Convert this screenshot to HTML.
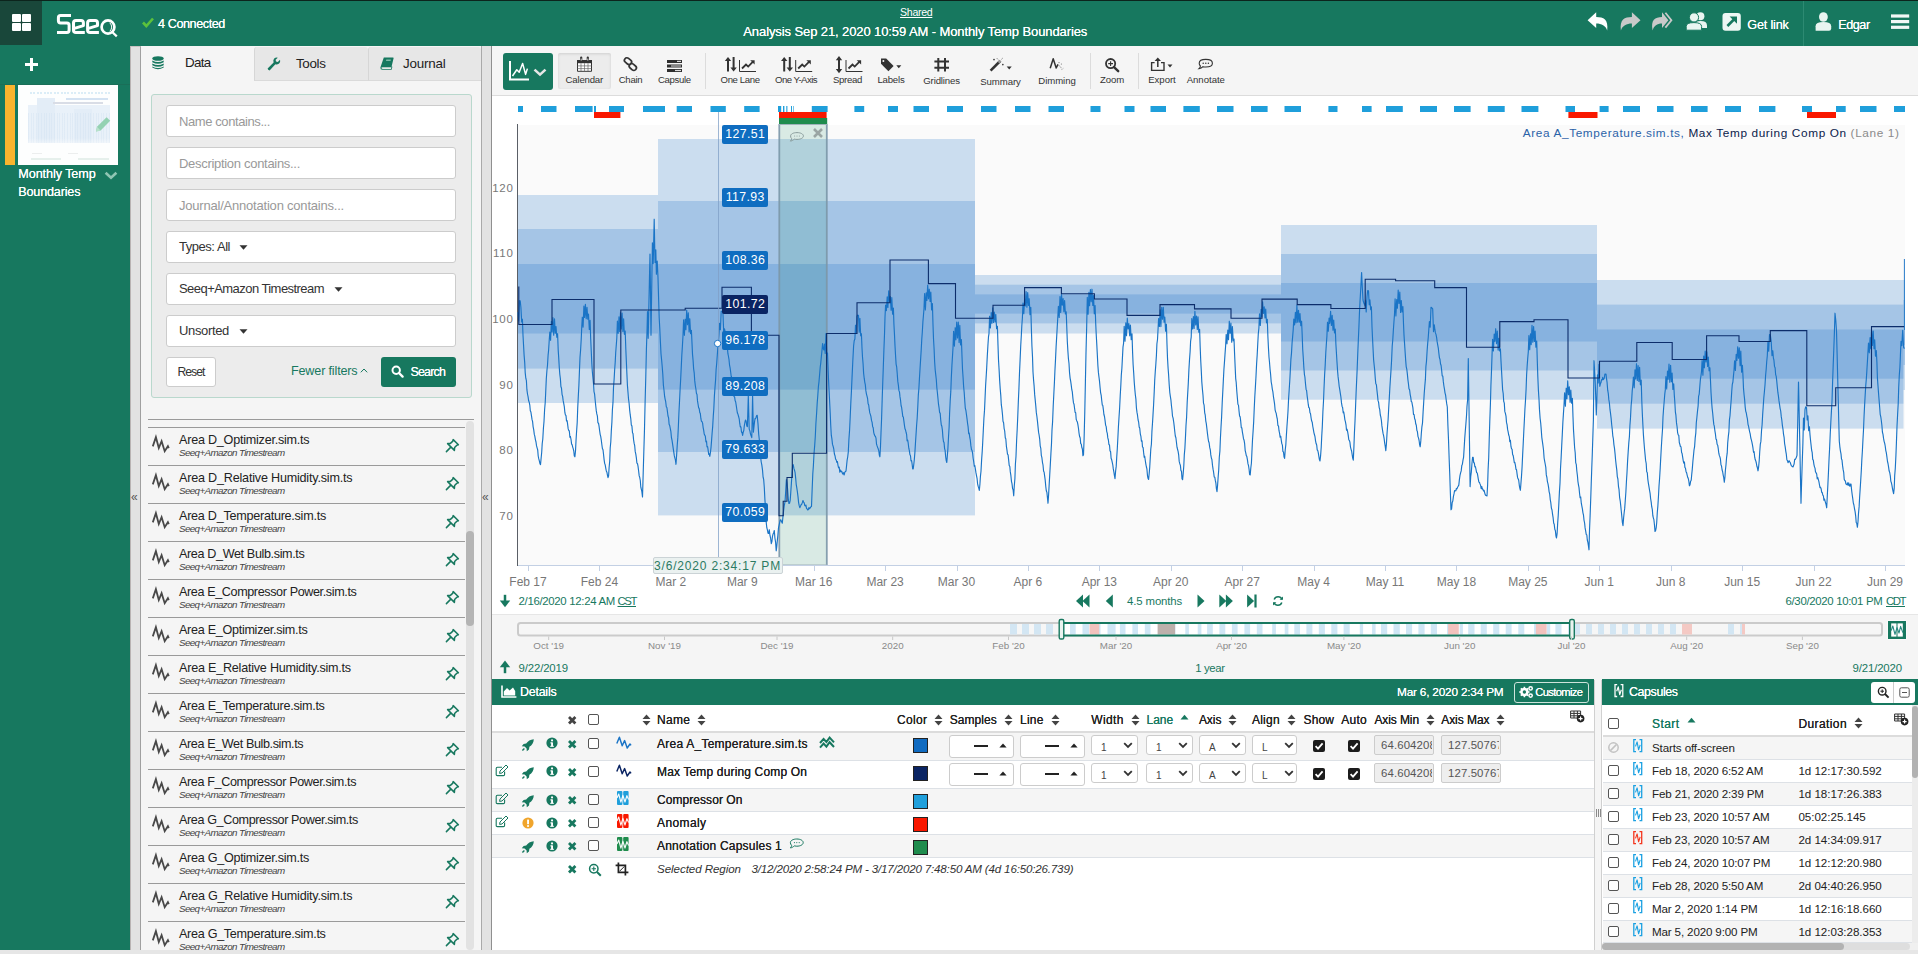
<!DOCTYPE html>
<html><head><meta charset="utf-8"><title>Seeq</title>
<style>
*{box-sizing:border-box}
html,body{margin:0;padding:0}
body{width:1918px;height:954px;overflow:hidden;background:#fff;font-family:"Liberation Sans",sans-serif;color:#222;position:relative;font-size:12px}
.abs{position:absolute}
.t{position:absolute;white-space:nowrap;line-height:1}
svg{position:absolute;overflow:visible}
#hdr{position:absolute;left:0;top:0;width:1918px;height:46px;background:#17785f;border-top:1px solid #0c241c}
#nav{position:absolute;left:0;top:46px;width:130px;height:904px;background:#17785f}
#bot{position:absolute;left:0;top:950px;width:1918px;height:4px;background:#e6e6e6}
.w{color:#fff}

#spl1{position:absolute;left:130px;top:46px;width:11px;height:904px;background:#e2e2e2;border-left:1px solid #b9b3b3;border-top:1px solid #c9c3c3;border-right:1px solid #a0a0a0}
#spl2{position:absolute;left:481px;top:46px;width:11px;height:904px;background:#e2e2e2;border-left:1px solid #a9a9a9;border-right:1px solid #8a8a8a}
#pnl{position:absolute;left:141px;top:46px;width:340px;height:904px;background:#f5f5f5}
.tab{position:absolute;top:47px;height:34px;background:#e7e7e7;border-left:1px solid #d6d6d6;border-bottom:1px solid #dadada;border-radius:3px 3px 0 0}
.inp{position:absolute;left:166px;width:290px;height:32px;background:#fff;border:1px solid #ccc;border-radius:3px;font-size:13px;line-height:30px;padding-left:12px;white-space:nowrap}
.ph{color:#999}
.li{position:absolute;left:148px;width:317px;height:38px;border-top:1px solid #9a9a9a}
.li .n{position:absolute;left:31px;top:4px;font-size:12.6px;color:#222;white-space:nowrap;line-height:15px;letter-spacing:-0.15px}
.li .s{position:absolute;left:31px;top:18px;font-size:9.6px;font-style:italic;color:#444;white-space:nowrap;line-height:12px;letter-spacing:-0.1px}

#tb{position:absolute;left:492px;top:46px;width:1426px;height:50px;background:#f5f5f5;border-bottom:1px solid #dcdcdc}
.sep{position:absolute;top:53px;width:1px;height:36px;background:#dcdcdc}

.vl{position:absolute;width:46px;height:19px;border-radius:2px;color:#fff;font-size:12.3px;line-height:19px;text-align:center;letter-spacing:.42px;white-space:nowrap;padding-left:.5px}

#scr{position:absolute;left:492px;top:614px;width:1426px;height:66px;background:#f5f5f5;border-top:1px solid #e6e6e6}

.hd{position:absolute;background:#17785f;height:26px;top:679px}
.row{position:absolute;left:492px;width:1102px;border-bottom:1px solid #dde1e6}
.sel{position:absolute;background:#fff;border:1px solid #ccc;border-radius:3px}
.ro{position:absolute;background:#eee;border:1px solid #ccc;border-radius:2px;height:20px;overflow:hidden}
.cb{position:absolute;width:11px;height:11px;border:1.3px solid #555;border-radius:2px;background:#fff}
.cbk{position:absolute;width:12px;height:12px;border-radius:2px;background:#1c1c1c}
.sw{position:absolute;left:913px;width:15px;height:15px;border:1px solid #222}
</style></head>
<body>
<div class="abs" style="left:492px;top:96px;width:1426px;height:518px;background:#fff"></div>
<div id="hdr"></div>
<div class="abs" style="left:0;top:1px;width:42px;height:44px;background:#19473a"></div>
<div class="abs" style="left:12px;top:14px;width:9px;height:8px;background:#fff;border-radius:1px"></div>
<div class="abs" style="left:22px;top:14px;width:9px;height:8px;background:#fff;border-radius:1px"></div>
<div class="abs" style="left:12px;top:23px;width:9px;height:8px;background:#fff;border-radius:1px"></div>
<div class="abs" style="left:22px;top:23px;width:9px;height:8px;background:#fff;border-radius:1px"></div>
<svg style="left:50px;top:8px" width="75" height="34" viewBox="50 8 75 34">
<g fill="none" stroke="#fff" stroke-width="3" stroke-linejoin="round">
<path d="M71 15.6 H60.6 Q58.4 15.6 58.4 17.8 V20.8 Q58.4 23 60.6 23 H66.9 Q69.1 23 69.1 25.2 V30.3 Q69.1 32.5 66.9 32.5 H57"/>
<path d="M73.6 28.6 L83.4 25.6 V22.8 Q83.4 20.5 81 20.5 H76 Q73.5 20.5 73.5 22.8 V30.2 Q73.5 32.5 76 32.5 H84.8"/>
<path d="M87.7 28.6 L97.5 25.6 V22.8 Q97.5 20.5 95.1 20.5 H90.1 Q87.6 20.5 87.6 22.8 V30.2 Q87.6 32.5 90.1 32.5 H98.9"/>
<ellipse cx="108" cy="27" rx="6.4" ry="6.6" stroke-width="2.7"/>
</g>
<path d="M111.4 31.2 L116.8 36.4" stroke="#fff" stroke-width="2.2" fill="none"/>
<path d="M109.8 22.8 Q113.6 27 109.8 31.4" stroke="#fff" stroke-width="1" fill="none"/>
</svg>
<svg style="left:142px;top:17px" width="12" height="11" viewBox="0 0 12 11"><path d="M1 5.5 L4.3 9 L11 1.5" stroke="#5cc13c" stroke-width="2.6" fill="none"/></svg>
<div class="t" style="left:158.00px;top:13.60px;font-size:12.60px;color:#fff;height:20px;line-height:20px;letter-spacing:-0.405px;text-shadow:0 0 .5px #fff;">4 Connected</div>
<div class="t" style="left:900.05px;top:2.40px;font-size:10.60px;color:#fff;height:20px;line-height:20px;letter-spacing:-0.313px;text-decoration:underline;">Shared</div>
<div class="t" style="left:743.30px;top:21.50px;font-size:13.00px;color:#fff;height:20px;line-height:20px;letter-spacing:-0.099px;text-shadow:0 0 .4px #fff;">Analysis Sep 21, 2020 10:59 AM - Monthly Temp Boundaries</div>
<svg style="left:1578px;top:0" width="340" height="46" viewBox="1578 0 340 46"><path d="M1587.6 20.2 L1596.2 12.3 V17 C1603.6 17 1608.6 19.5 1607.2 30.4 C1605.6 25.5 1601.6 23.4 1596.2 23.4 V28 Z" fill="#fff"/><path d="M1640.5 20.2 L1631.9 12.3 V17 C1624.5 17 1619.5 19.5 1620.9 30.4 C1622.5 25.5 1626.5 23.4 1631.9 23.4 V28 Z" fill="#c9c9c9"/><path d="M1662 17 C1655 17 1650.5 20 1652.6 30.4 C1654 25.5 1657 23.4 1662 23.4 V28 L1668.4 20.2 L1662 12.3 Z" fill="#c9c9c9"/><path d="M1665.4 12.8 L1671.4 20.2 L1665.4 27.6" stroke="#c9c9c9" stroke-width="1.8" fill="none"/><g fill="#e9f5f1"><circle cx="1700.4" cy="16.2" r="4"/><path d="M1694.8 29.8 V25.4 Q1694.8 21 1700.6 21 Q1707 21 1707 25.4 V28 H1700 Z"/></g><g fill="#e9f5f1" stroke="#17785f" stroke-width="1"><circle cx="1694" cy="17.4" r="4.6"/><path d="M1686.2 30.2 V26.4 Q1686.2 22.6 1694 22.6 Q1701.6 22.6 1701.6 26.4 V30.2 Z"/></g><rect x="1722.5" y="13" width="18.3" height="17.7" rx="3" fill="#eef7f4"/><path d="M1727.4 26 L1735.4 18" stroke="#17785f" stroke-width="2.6"/><path d="M1729.6 16.4 H1737 V23.8 Z" fill="#17785f"/><path d="M1803.5 1 V46" stroke="#2d8a72" stroke-width="1"/><g fill="#e9f5f1"><ellipse cx="1823.4" cy="17" rx="4.4" ry="4.8"/><path d="M1815.6 30.7 V26.2 Q1815.6 22 1823.4 22 Q1831.2 22 1831.2 26.2 V28.4 Q1831.2 30.7 1829 30.7 Z"/></g><rect x="1891" y="14.4" width="18.2" height="3.2" fill="#f2f8f6"/><rect x="1891" y="20" width="18.2" height="3.2" fill="#f2f8f6"/><rect x="1891" y="25.7" width="18.2" height="3.2" fill="#f2f8f6"/></svg>
<div class="t" style="left:1747.30px;top:14.70px;font-size:12.60px;color:#fff;height:20px;line-height:20px;letter-spacing:-0.177px;text-shadow:0 0 .5px #fff;">Get link</div>
<div class="t" style="left:1838.30px;top:14.70px;font-size:12.60px;color:#fff;height:20px;line-height:20px;letter-spacing:-0.445px;text-shadow:0 0 .5px #fff;">Edgar</div>
<div id="nav"></div>
<div class="abs" style="left:25px;top:63px;width:13px;height:3px;background:#fff"></div>
<div class="abs" style="left:30px;top:58px;width:3px;height:13px;background:#fff"></div>
<div class="abs" style="left:0;top:84px;width:130px;height:1px;background:#1a6e58"></div>
<div class="abs" style="left:5px;top:85px;width:10px;height:80px;background:#fbb42e"></div>
<div class="abs" style="left:18px;top:85px;width:100px;height:80px;background:#fdfefe"></div>
<div class="abs" style="left:28px;top:105px;width:82px;height:38px;background:#e9f1f9"></div>
<div class="abs" style="left:37px;top:98px;width:18px;height:45px;background:#e3edf7"></div>
<div class="abs" style="left:74px;top:109px;width:18px;height:34px;background:#e3edf7"></div>
<div class="abs" style="left:28px;top:113px;width:82px;height:30px;opacity:.3;background:repeating-linear-gradient(90deg,#c9dcee 0,#c9dcee 1px,transparent 1px,transparent 2.6px)"></div>
<div class="abs" style="left:28px;top:138px;width:82px;height:11px;opacity:.9;background:linear-gradient(#ffffff00,#fdfefe)"></div>
<div class="abs" style="left:30px;top:92px;width:80px;height:1.5px;opacity:.5;background:repeating-linear-gradient(90deg,#b9dcf0 0,#b9dcf0 2px,transparent 2px,transparent 3.4px)"></div>
<div class="abs" style="left:66px;top:97.5px;width:42px;height:2px;background:#d3e2f2"></div>
<div class="abs" style="left:53px;top:102px;width:50px;height:2px;background:#d9dde6"></div>
<div class="abs" style="left:32px;top:152.5px;width:10px;height:1.6px;background:#eceeee"></div><div class="abs" style="left:68px;top:152.5px;width:10px;height:1.6px;background:#eceeee"></div>
<div class="abs" style="left:31px;top:158px;width:30px;height:1.6px;background:#e6f0ec"></div><div class="abs" style="left:78px;top:158px;width:31px;height:1.6px;background:#e6f0ec"></div>
<svg style="left:94px;top:115px" width="18" height="18" viewBox="0 0 18 18"><path d="M2 16.4 L3 11.8 L12.6 2.2 L16.2 5.8 L6.6 15.4 Z" fill="#8fd0ae" opacity=".95"/><path d="M2 16.4 L3 11.8 L6.6 15.4 Z" fill="#b8e2cc"/></svg>
<div class="t" style="left:18.30px;top:164.10px;font-size:12.60px;color:#fff;height:20px;line-height:20px;letter-spacing:-0.067px;text-shadow:0 0 .5px #fff;">Monthly Temp</div>
<div class="t" style="left:18.30px;top:181.60px;font-size:12.60px;color:#fff;height:20px;line-height:20px;letter-spacing:-0.174px;text-shadow:0 0 .5px #fff;">Boundaries</div>
<svg style="left:103.6px;top:170.6px" width="14" height="9" viewBox="0 0 14 9"><path d="M1.6 1.8 L7 6.8 L12.4 1.8" stroke="#8fc5b3" stroke-width="2.6" fill="none"/></svg>
<div id="spl1"></div><div id="pnl"></div><div id="spl2"></div>
<div class="t" style="left:131px;top:491px;font-size:12px;color:#555">&#171;</div>
<div class="t" style="left:482px;top:491px;font-size:12px;color:#555">&#171;</div>
<div class="tab" style="left:254px;width:114px"></div>
<div class="tab" style="left:368px;width:113px"></div>
<svg style="left:152.3px;top:56px" width="12" height="14" viewBox="0 0 12 14"><g fill="#17785f"><ellipse cx="6" cy="2.5" rx="5.7" ry="2.3"/><path d="M.3 4.4 Q6 7.4 11.7 4.4 V6.2 Q6 9.2 .3 6.2Z"/><path d="M.3 7.4 Q6 10.4 11.7 7.4 V9.2 Q6 12.2 .3 9.2Z"/><path d="M.3 10.4 Q6 13.4 11.7 10.4 V11.4 Q6 15 .3 11.4Z"/></g></svg>
<div class="t" style="left:185.00px;top:53.00px;font-size:13.40px;color:#222;height:20px;line-height:20px;letter-spacing:-0.701px;">Data</div>
<svg style="left:267px;top:57px" width="14" height="14" viewBox="0 0 14 14"><path d="M1.2 12.8 L2.6 13.6 L8.4 7.2 Q11 8 12.6 6 Q13.6 4.4 13 2.8 L10.8 5 L9 4.6 L8.6 2.8 L10.8 .8 Q8.8 .2 7.2 1.6 Q5.8 3.2 6.6 5.4 L.6 11.4Z" fill="#17785f"/></svg>
<div class="t" style="left:296.00px;top:54.00px;font-size:13.40px;color:#222;height:20px;line-height:20px;letter-spacing:-0.356px;">Tools</div>
<svg style="left:380px;top:57px" width="14" height="13" viewBox="0 0 14 13"><path d="M3.8 .4 H13 Q13.8 .4 13.6 1.2 L11.4 10.2 H2.4 Q1.2 10.2 1.3 11.1 Q1.5 11.9 2.6 11.9 H11 L11.6 9.6 L12.4 9.8 L11.6 12.8 H2.2 Q.2 12.8 .4 10.6Z" fill="#17785f"/><rect x="6" y="2.4" width="4.6" height="1.6" fill="#7db9a6" transform="skewX(-12) translate(.8 0)"/></svg>
<div class="t" style="left:403.00px;top:54.00px;font-size:13.40px;color:#222;height:20px;line-height:20px;letter-spacing:-0.207px;">Journal</div>
<div class="abs" style="left:150.5px;top:94px;width:321.5px;height:304px;background:#ececec;border:1px solid #b9d8cd;border-radius:3px"></div>
<div class="inp" style="top:105px"></div>
<div class="t" style="left:179.00px;top:111.60px;font-size:13.00px;color:#999;height:20px;line-height:20px;letter-spacing:-0.409px;">Name contains...</div>
<div class="inp" style="top:147px"></div>
<div class="t" style="left:179.00px;top:153.60px;font-size:13.00px;color:#999;height:20px;line-height:20px;letter-spacing:-0.300px;">Description contains...</div>
<div class="inp" style="top:189px"></div>
<div class="t" style="left:179.00px;top:195.60px;font-size:13.00px;color:#999;height:20px;line-height:20px;letter-spacing:-0.209px;">Journal/Annotation contains...</div>
<div class="inp" style="top:231px"></div>
<div class="t" style="left:179.00px;top:237.40px;font-size:13.00px;color:#333;height:20px;line-height:20px;letter-spacing:-0.464px;">Types: All</div>
<svg style="left:239px;top:245px" width="9" height="5" viewBox="0 0 9 5"><path d="M0.5 0.3 H8.5 L4.5 4.7 Z" fill="#333"/></svg>
<div class="inp" style="top:273px"></div>
<div class="t" style="left:179.00px;top:279.40px;font-size:13.00px;color:#333;height:20px;line-height:20px;letter-spacing:-0.553px;">Seeq+Amazon Timestream</div>
<svg style="left:334px;top:287px" width="9" height="5" viewBox="0 0 9 5"><path d="M0.5 0.3 H8.5 L4.5 4.7 Z" fill="#333"/></svg>
<div class="inp" style="top:315px"></div>
<div class="t" style="left:179.00px;top:321.40px;font-size:13.00px;color:#333;height:20px;line-height:20px;letter-spacing:-0.344px;">Unsorted</div>
<svg style="left:239px;top:329px" width="9" height="5" viewBox="0 0 9 5"><path d="M0.5 0.3 H8.5 L4.5 4.7 Z" fill="#333"/></svg>
<div class="abs" style="left:166px;top:357px;width:50px;height:30px;background:#fff;border:1px solid #ccc;border-radius:3px"></div>
<div class="t" style="left:177.40px;top:362.30px;font-size:12.20px;color:#333;height:20px;line-height:20px;letter-spacing:-0.934px;">Reset</div>
<div class="t" style="left:291.00px;top:361.00px;font-size:12.60px;color:#17785f;height:20px;line-height:20px;letter-spacing:-0.162px;">Fewer filters</div>
<svg style="left:360px;top:368px" width="8" height="5" viewBox="0 0 8 5"><path d="M.8 4.3 L4 1 L7.2 4.3" fill="none" stroke="#17785f" stroke-width="1"/></svg>
<div class="abs" style="left:381px;top:357px;width:75px;height:30px;background:#17785f;border-radius:3px"></div>
<svg style="left:391px;top:365px" width="13" height="13" viewBox="0 0 13 13"><circle cx="5.2" cy="5.2" r="3.7" fill="none" stroke="#fff" stroke-width="2"/><path d="M8 8 L11.6 11.6" stroke="#fff" stroke-width="2.4" stroke-linecap="round"/></svg>
<div class="t" style="left:410.50px;top:362.00px;font-size:12.40px;color:#fff;height:20px;line-height:20px;letter-spacing:-0.798px;text-shadow:0 0 .4px #fff;">Search</div>
<div class="abs" style="left:148px;top:419px;width:326px;height:1px;background:#9a9a9a"></div>
<div class="abs" style="left:466px;top:421px;width:8px;height:529px;background:#e2e2e2;border-radius:4px"></div>
<div class="abs" style="left:466px;top:531px;width:8px;height:95px;background:#b4b4b4;border-radius:4px"></div>
<div class="li" style="top:427px;height:38px;overflow:hidden"><div class="t" style="left:31.00px;top:2.30px;font-size:12.60px;color:#222;height:20px;line-height:20px;letter-spacing:-0.232px;">Area D_Optimizer.sim.ts</div><div class="t" style="left:31.00px;top:14.80px;font-size:9.80px;color:#444;height:20px;line-height:20px;letter-spacing:-0.610px;font-style:italic;">Seeq+Amazon Timestream</div></div>
<div class="abs" style="left:148px;top:427px;width:317px;height:38px;overflow:hidden"><svg style="left:4px;top:9.3px" width="18" height="17" viewBox="0 0 18 17"><path d="M0.8 10.4 L3.9 1.2 L6.8 12 L9.6 5.2 L12.7 15.2 L15.9 10.2 L16.8 12.2" fill="none" stroke="#484848" stroke-width="1.8" stroke-linejoin="miter"/></svg><svg style="left:297px;top:11px" width="15" height="15" viewBox="0 0 15 15"><g fill="none" stroke="#17785f" stroke-width="1.5" stroke-linejoin="round" stroke-linecap="round"><path d="M8.2 1.6 L13.4 6.8 L11.6 7.4 L9.6 9.6 L9.4 12.4 L2.6 5.6 L5.4 5.4 L7.6 3.4 Z"/><path d="M5.6 9.4 L1.4 13.6"/></g></svg></div>
<div class="li" style="top:465px;height:38px;overflow:hidden"><div class="t" style="left:31.00px;top:2.30px;font-size:12.60px;color:#222;height:20px;line-height:20px;letter-spacing:-0.201px;">Area D_Relative Humidity.sim.ts</div><div class="t" style="left:31.00px;top:14.80px;font-size:9.80px;color:#444;height:20px;line-height:20px;letter-spacing:-0.610px;font-style:italic;">Seeq+Amazon Timestream</div></div>
<div class="abs" style="left:148px;top:465px;width:317px;height:38px;overflow:hidden"><svg style="left:4px;top:9.3px" width="18" height="17" viewBox="0 0 18 17"><path d="M0.8 10.4 L3.9 1.2 L6.8 12 L9.6 5.2 L12.7 15.2 L15.9 10.2 L16.8 12.2" fill="none" stroke="#484848" stroke-width="1.8" stroke-linejoin="miter"/></svg><svg style="left:297px;top:11px" width="15" height="15" viewBox="0 0 15 15"><g fill="none" stroke="#17785f" stroke-width="1.5" stroke-linejoin="round" stroke-linecap="round"><path d="M8.2 1.6 L13.4 6.8 L11.6 7.4 L9.6 9.6 L9.4 12.4 L2.6 5.6 L5.4 5.4 L7.6 3.4 Z"/><path d="M5.6 9.4 L1.4 13.6"/></g></svg></div>
<div class="li" style="top:503px;height:38px;overflow:hidden"><div class="t" style="left:31.00px;top:2.30px;font-size:12.60px;color:#222;height:20px;line-height:20px;letter-spacing:-0.254px;">Area D_Temperature.sim.ts</div><div class="t" style="left:31.00px;top:14.80px;font-size:9.80px;color:#444;height:20px;line-height:20px;letter-spacing:-0.610px;font-style:italic;">Seeq+Amazon Timestream</div></div>
<div class="abs" style="left:148px;top:503px;width:317px;height:38px;overflow:hidden"><svg style="left:4px;top:9.3px" width="18" height="17" viewBox="0 0 18 17"><path d="M0.8 10.4 L3.9 1.2 L6.8 12 L9.6 5.2 L12.7 15.2 L15.9 10.2 L16.8 12.2" fill="none" stroke="#484848" stroke-width="1.8" stroke-linejoin="miter"/></svg><svg style="left:297px;top:11px" width="15" height="15" viewBox="0 0 15 15"><g fill="none" stroke="#17785f" stroke-width="1.5" stroke-linejoin="round" stroke-linecap="round"><path d="M8.2 1.6 L13.4 6.8 L11.6 7.4 L9.6 9.6 L9.4 12.4 L2.6 5.6 L5.4 5.4 L7.6 3.4 Z"/><path d="M5.6 9.4 L1.4 13.6"/></g></svg></div>
<div class="li" style="top:541px;height:38px;overflow:hidden"><div class="t" style="left:31.00px;top:2.30px;font-size:12.60px;color:#222;height:20px;line-height:20px;letter-spacing:-0.364px;">Area D_Wet Bulb.sim.ts</div><div class="t" style="left:31.00px;top:14.80px;font-size:9.80px;color:#444;height:20px;line-height:20px;letter-spacing:-0.610px;font-style:italic;">Seeq+Amazon Timestream</div></div>
<div class="abs" style="left:148px;top:541px;width:317px;height:38px;overflow:hidden"><svg style="left:4px;top:9.3px" width="18" height="17" viewBox="0 0 18 17"><path d="M0.8 10.4 L3.9 1.2 L6.8 12 L9.6 5.2 L12.7 15.2 L15.9 10.2 L16.8 12.2" fill="none" stroke="#484848" stroke-width="1.8" stroke-linejoin="miter"/></svg><svg style="left:297px;top:11px" width="15" height="15" viewBox="0 0 15 15"><g fill="none" stroke="#17785f" stroke-width="1.5" stroke-linejoin="round" stroke-linecap="round"><path d="M8.2 1.6 L13.4 6.8 L11.6 7.4 L9.6 9.6 L9.4 12.4 L2.6 5.6 L5.4 5.4 L7.6 3.4 Z"/><path d="M5.6 9.4 L1.4 13.6"/></g></svg></div>
<div class="li" style="top:579px;height:38px;overflow:hidden"><div class="t" style="left:31.00px;top:2.30px;font-size:12.60px;color:#222;height:20px;line-height:20px;letter-spacing:-0.385px;">Area E_Compressor Power.sim.ts</div><div class="t" style="left:31.00px;top:14.80px;font-size:9.80px;color:#444;height:20px;line-height:20px;letter-spacing:-0.610px;font-style:italic;">Seeq+Amazon Timestream</div></div>
<div class="abs" style="left:148px;top:579px;width:317px;height:38px;overflow:hidden"><svg style="left:4px;top:9.3px" width="18" height="17" viewBox="0 0 18 17"><path d="M0.8 10.4 L3.9 1.2 L6.8 12 L9.6 5.2 L12.7 15.2 L15.9 10.2 L16.8 12.2" fill="none" stroke="#484848" stroke-width="1.8" stroke-linejoin="miter"/></svg><svg style="left:297px;top:11px" width="15" height="15" viewBox="0 0 15 15"><g fill="none" stroke="#17785f" stroke-width="1.5" stroke-linejoin="round" stroke-linecap="round"><path d="M8.2 1.6 L13.4 6.8 L11.6 7.4 L9.6 9.6 L9.4 12.4 L2.6 5.6 L5.4 5.4 L7.6 3.4 Z"/><path d="M5.6 9.4 L1.4 13.6"/></g></svg></div>
<div class="li" style="top:617px;height:38px;overflow:hidden"><div class="t" style="left:31.00px;top:2.30px;font-size:12.60px;color:#222;height:20px;line-height:20px;letter-spacing:-0.289px;">Area E_Optimizer.sim.ts</div><div class="t" style="left:31.00px;top:14.80px;font-size:9.80px;color:#444;height:20px;line-height:20px;letter-spacing:-0.610px;font-style:italic;">Seeq+Amazon Timestream</div></div>
<div class="abs" style="left:148px;top:617px;width:317px;height:38px;overflow:hidden"><svg style="left:4px;top:9.3px" width="18" height="17" viewBox="0 0 18 17"><path d="M0.8 10.4 L3.9 1.2 L6.8 12 L9.6 5.2 L12.7 15.2 L15.9 10.2 L16.8 12.2" fill="none" stroke="#484848" stroke-width="1.8" stroke-linejoin="miter"/></svg><svg style="left:297px;top:11px" width="15" height="15" viewBox="0 0 15 15"><g fill="none" stroke="#17785f" stroke-width="1.5" stroke-linejoin="round" stroke-linecap="round"><path d="M8.2 1.6 L13.4 6.8 L11.6 7.4 L9.6 9.6 L9.4 12.4 L2.6 5.6 L5.4 5.4 L7.6 3.4 Z"/><path d="M5.6 9.4 L1.4 13.6"/></g></svg></div>
<div class="li" style="top:655px;height:38px;overflow:hidden"><div class="t" style="left:31.00px;top:2.30px;font-size:12.60px;color:#222;height:20px;line-height:20px;letter-spacing:-0.226px;">Area E_Relative Humidity.sim.ts</div><div class="t" style="left:31.00px;top:14.80px;font-size:9.80px;color:#444;height:20px;line-height:20px;letter-spacing:-0.610px;font-style:italic;">Seeq+Amazon Timestream</div></div>
<div class="abs" style="left:148px;top:655px;width:317px;height:38px;overflow:hidden"><svg style="left:4px;top:9.3px" width="18" height="17" viewBox="0 0 18 17"><path d="M0.8 10.4 L3.9 1.2 L6.8 12 L9.6 5.2 L12.7 15.2 L15.9 10.2 L16.8 12.2" fill="none" stroke="#484848" stroke-width="1.8" stroke-linejoin="miter"/></svg><svg style="left:297px;top:11px" width="15" height="15" viewBox="0 0 15 15"><g fill="none" stroke="#17785f" stroke-width="1.5" stroke-linejoin="round" stroke-linecap="round"><path d="M8.2 1.6 L13.4 6.8 L11.6 7.4 L9.6 9.6 L9.4 12.4 L2.6 5.6 L5.4 5.4 L7.6 3.4 Z"/><path d="M5.6 9.4 L1.4 13.6"/></g></svg></div>
<div class="li" style="top:693px;height:38px;overflow:hidden"><div class="t" style="left:31.00px;top:2.30px;font-size:12.60px;color:#222;height:20px;line-height:20px;letter-spacing:-0.278px;">Area E_Temperature.sim.ts</div><div class="t" style="left:31.00px;top:14.80px;font-size:9.80px;color:#444;height:20px;line-height:20px;letter-spacing:-0.610px;font-style:italic;">Seeq+Amazon Timestream</div></div>
<div class="abs" style="left:148px;top:693px;width:317px;height:38px;overflow:hidden"><svg style="left:4px;top:9.3px" width="18" height="17" viewBox="0 0 18 17"><path d="M0.8 10.4 L3.9 1.2 L6.8 12 L9.6 5.2 L12.7 15.2 L15.9 10.2 L16.8 12.2" fill="none" stroke="#484848" stroke-width="1.8" stroke-linejoin="miter"/></svg><svg style="left:297px;top:11px" width="15" height="15" viewBox="0 0 15 15"><g fill="none" stroke="#17785f" stroke-width="1.5" stroke-linejoin="round" stroke-linecap="round"><path d="M8.2 1.6 L13.4 6.8 L11.6 7.4 L9.6 9.6 L9.4 12.4 L2.6 5.6 L5.4 5.4 L7.6 3.4 Z"/><path d="M5.6 9.4 L1.4 13.6"/></g></svg></div>
<div class="li" style="top:731px;height:38px;overflow:hidden"><div class="t" style="left:31.00px;top:2.30px;font-size:12.60px;color:#222;height:20px;line-height:20px;letter-spacing:-0.387px;">Area E_Wet Bulb.sim.ts</div><div class="t" style="left:31.00px;top:14.80px;font-size:9.80px;color:#444;height:20px;line-height:20px;letter-spacing:-0.610px;font-style:italic;">Seeq+Amazon Timestream</div></div>
<div class="abs" style="left:148px;top:731px;width:317px;height:38px;overflow:hidden"><svg style="left:4px;top:9.3px" width="18" height="17" viewBox="0 0 18 17"><path d="M0.8 10.4 L3.9 1.2 L6.8 12 L9.6 5.2 L12.7 15.2 L15.9 10.2 L16.8 12.2" fill="none" stroke="#484848" stroke-width="1.8" stroke-linejoin="miter"/></svg><svg style="left:297px;top:11px" width="15" height="15" viewBox="0 0 15 15"><g fill="none" stroke="#17785f" stroke-width="1.5" stroke-linejoin="round" stroke-linecap="round"><path d="M8.2 1.6 L13.4 6.8 L11.6 7.4 L9.6 9.6 L9.4 12.4 L2.6 5.6 L5.4 5.4 L7.6 3.4 Z"/><path d="M5.6 9.4 L1.4 13.6"/></g></svg></div>
<div class="li" style="top:769px;height:38px;overflow:hidden"><div class="t" style="left:31.00px;top:2.30px;font-size:12.60px;color:#222;height:20px;line-height:20px;letter-spacing:-0.372px;">Area F_Compressor Power.sim.ts</div><div class="t" style="left:31.00px;top:14.80px;font-size:9.80px;color:#444;height:20px;line-height:20px;letter-spacing:-0.610px;font-style:italic;">Seeq+Amazon Timestream</div></div>
<div class="abs" style="left:148px;top:769px;width:317px;height:38px;overflow:hidden"><svg style="left:4px;top:9.3px" width="18" height="17" viewBox="0 0 18 17"><path d="M0.8 10.4 L3.9 1.2 L6.8 12 L9.6 5.2 L12.7 15.2 L15.9 10.2 L16.8 12.2" fill="none" stroke="#484848" stroke-width="1.8" stroke-linejoin="miter"/></svg><svg style="left:297px;top:11px" width="15" height="15" viewBox="0 0 15 15"><g fill="none" stroke="#17785f" stroke-width="1.5" stroke-linejoin="round" stroke-linecap="round"><path d="M8.2 1.6 L13.4 6.8 L11.6 7.4 L9.6 9.6 L9.4 12.4 L2.6 5.6 L5.4 5.4 L7.6 3.4 Z"/><path d="M5.6 9.4 L1.4 13.6"/></g></svg></div>
<div class="li" style="top:807px;height:38px;overflow:hidden"><div class="t" style="left:31.00px;top:2.30px;font-size:12.60px;color:#222;height:20px;line-height:20px;letter-spacing:-0.382px;">Area G_Compressor Power.sim.ts</div><div class="t" style="left:31.00px;top:14.80px;font-size:9.80px;color:#444;height:20px;line-height:20px;letter-spacing:-0.610px;font-style:italic;">Seeq+Amazon Timestream</div></div>
<div class="abs" style="left:148px;top:807px;width:317px;height:38px;overflow:hidden"><svg style="left:4px;top:9.3px" width="18" height="17" viewBox="0 0 18 17"><path d="M0.8 10.4 L3.9 1.2 L6.8 12 L9.6 5.2 L12.7 15.2 L15.9 10.2 L16.8 12.2" fill="none" stroke="#484848" stroke-width="1.8" stroke-linejoin="miter"/></svg><svg style="left:297px;top:11px" width="15" height="15" viewBox="0 0 15 15"><g fill="none" stroke="#17785f" stroke-width="1.5" stroke-linejoin="round" stroke-linecap="round"><path d="M8.2 1.6 L13.4 6.8 L11.6 7.4 L9.6 9.6 L9.4 12.4 L2.6 5.6 L5.4 5.4 L7.6 3.4 Z"/><path d="M5.6 9.4 L1.4 13.6"/></g></svg></div>
<div class="li" style="top:845px;height:38px;overflow:hidden"><div class="t" style="left:31.00px;top:2.30px;font-size:12.60px;color:#222;height:20px;line-height:20px;letter-spacing:-0.284px;">Area G_Optimizer.sim.ts</div><div class="t" style="left:31.00px;top:14.80px;font-size:9.80px;color:#444;height:20px;line-height:20px;letter-spacing:-0.610px;font-style:italic;">Seeq+Amazon Timestream</div></div>
<div class="abs" style="left:148px;top:845px;width:317px;height:38px;overflow:hidden"><svg style="left:4px;top:9.3px" width="18" height="17" viewBox="0 0 18 17"><path d="M0.8 10.4 L3.9 1.2 L6.8 12 L9.6 5.2 L12.7 15.2 L15.9 10.2 L16.8 12.2" fill="none" stroke="#484848" stroke-width="1.8" stroke-linejoin="miter"/></svg><svg style="left:297px;top:11px" width="15" height="15" viewBox="0 0 15 15"><g fill="none" stroke="#17785f" stroke-width="1.5" stroke-linejoin="round" stroke-linecap="round"><path d="M8.2 1.6 L13.4 6.8 L11.6 7.4 L9.6 9.6 L9.4 12.4 L2.6 5.6 L5.4 5.4 L7.6 3.4 Z"/><path d="M5.6 9.4 L1.4 13.6"/></g></svg></div>
<div class="li" style="top:883px;height:38px;overflow:hidden"><div class="t" style="left:31.00px;top:2.30px;font-size:12.60px;color:#222;height:20px;line-height:20px;letter-spacing:-0.230px;">Area G_Relative Humidity.sim.ts</div><div class="t" style="left:31.00px;top:14.80px;font-size:9.80px;color:#444;height:20px;line-height:20px;letter-spacing:-0.610px;font-style:italic;">Seeq+Amazon Timestream</div></div>
<div class="abs" style="left:148px;top:883px;width:317px;height:38px;overflow:hidden"><svg style="left:4px;top:9.3px" width="18" height="17" viewBox="0 0 18 17"><path d="M0.8 10.4 L3.9 1.2 L6.8 12 L9.6 5.2 L12.7 15.2 L15.9 10.2 L16.8 12.2" fill="none" stroke="#484848" stroke-width="1.8" stroke-linejoin="miter"/></svg><svg style="left:297px;top:11px" width="15" height="15" viewBox="0 0 15 15"><g fill="none" stroke="#17785f" stroke-width="1.5" stroke-linejoin="round" stroke-linecap="round"><path d="M8.2 1.6 L13.4 6.8 L11.6 7.4 L9.6 9.6 L9.4 12.4 L2.6 5.6 L5.4 5.4 L7.6 3.4 Z"/><path d="M5.6 9.4 L1.4 13.6"/></g></svg></div>
<div class="li" style="top:921px;height:29px;overflow:hidden"><div class="t" style="left:31.00px;top:2.30px;font-size:12.60px;color:#222;height:20px;line-height:20px;letter-spacing:-0.294px;">Area G_Temperature.sim.ts</div><div class="t" style="left:31.00px;top:14.80px;font-size:9.80px;color:#444;height:20px;line-height:20px;letter-spacing:-0.610px;font-style:italic;">Seeq+Amazon Timestream</div></div>
<div class="abs" style="left:148px;top:921px;width:317px;height:29px;overflow:hidden"><svg style="left:4px;top:9.3px" width="18" height="17" viewBox="0 0 18 17"><path d="M0.8 10.4 L3.9 1.2 L6.8 12 L9.6 5.2 L12.7 15.2 L15.9 10.2 L16.8 12.2" fill="none" stroke="#484848" stroke-width="1.8" stroke-linejoin="miter"/></svg><svg style="left:297px;top:11px" width="15" height="15" viewBox="0 0 15 15"><g fill="none" stroke="#17785f" stroke-width="1.5" stroke-linejoin="round" stroke-linecap="round"><path d="M8.2 1.6 L13.4 6.8 L11.6 7.4 L9.6 9.6 L9.4 12.4 L2.6 5.6 L5.4 5.4 L7.6 3.4 Z"/><path d="M5.6 9.4 L1.4 13.6"/></g></svg></div>
<div id="tb"></div>
<div class="abs" style="left:491px;top:46px;width:1px;height:904px;background:#8f8f8f"></div>
<div class="abs" style="left:503px;top:53px;width:50px;height:37px;background:#17785f;border-radius:3px"></div>
<svg style="left:503px;top:53px" width="50" height="37" viewBox="503 53 50 37"><path d="M510 61 V79.5 H529" stroke="#fff" stroke-width="2" fill="none"/><path d="M512.5 76 L516.8 69.8 L519.2 72.2 L522.6 63.4 L525.6 74.4 L527.4 68.6" stroke="#fff" stroke-width="1.5" fill="none" stroke-linejoin="round"/><path d="M534.5 69.6 L540 74.6 L545.5 69.6" stroke="#e6e6e6" stroke-width="2.6" fill="none"/></svg>
<div class="abs" style="left:558px;top:53px;width:53px;height:36px;background:#ececec;border-radius:2px;box-shadow:inset 0 1px 3px rgba(0,0,0,.12)"></div>
<svg style="left:492px;top:46px" width="1426" height="50" viewBox="492 46 1426 50"><path d="M577.5 60.5 H591.5 V71.3 H577.5 Z" fill="#fff" stroke="#333" stroke-width="1"/><path d="M577 60 H592 V63.2 H577 Z" fill="#333"/><path d="M581.2 57.6 V61.5 M587.8 57.6 V61.5" stroke="#333" stroke-width="2.2" stroke-linecap="round"/><path d="M581.2 58.6 V60.6 M587.8 58.6 V60.6" stroke="#fff" stroke-width=".8"/><path d="M577.5 65.9 H591.5 M577.5 68.6 H591.5 M581 63.2 V71.3 M584.5 63.2 V71.3 M588 63.2 V71.3" stroke="#666" stroke-width=".7"/><g fill="none" stroke="#333" stroke-width="1.7"><rect x="-3.9" y="-2.5" width="7.8" height="5" rx="2.5" transform="translate(628 61.2) rotate(40)"/><rect x="-3.9" y="-2.5" width="7.8" height="5" rx="2.5" transform="translate(632.8 67) rotate(40)"/></g><rect x="667" y="60" width="15" height="3" fill="#2f2f2f"/><rect x="667" y="64.5" width="15" height="3" fill="#2f2f2f"/><rect x="667" y="69" width="15" height="3" fill="#2f2f2f"/><rect x="677" y="60.8" width="4" height="1.2" fill="#ddd"/><rect x="671" y="65.3" width="10" height="1.4" fill="#aaa"/><rect x="675" y="69.9" width="6" height="1.2" fill="#ddd"/><path d="M728 71.5 V59" stroke="#333" stroke-width="2" fill="none"/><path d="M724.8 61 L728 57 L731.2 61 Z" fill="#333"/><path d="M733.6 57 V69.5" stroke="#333" stroke-width="2" fill="none"/><path d="M730.4 67.5 L733.6 71.5 L736.8 67.5 Z" fill="#333"/><path d="M739.5 60 V71.5 H756" stroke="#333" stroke-width="1" fill="none"/><path d="M742 68.5 L746 64.5 L748.2 66.6 L753 61.6" stroke="#333" stroke-width="1.8" fill="none"/><path d="M750.2 60.2 L754.6 60.2 L754.6 64.6 Z" fill="#333"/><path d="M784.2 71.5 V59" stroke="#333" stroke-width="2" fill="none"/><path d="M781 61 L784.2 57 L787.4 61 Z" fill="#333"/><path d="M789.8 57 V69.5" stroke="#333" stroke-width="2" fill="none"/><path d="M786.6 67.5 L789.8 71.5 L793 67.5 Z" fill="#333"/><path d="M795.7 60 V71.5 H812.2" stroke="#333" stroke-width="1" fill="none"/><path d="M798.2 68.5 L802.2 64.5 L804.4 66.6 L809.2 61.6" stroke="#333" stroke-width="1.8" fill="none"/><path d="M806.4 60.2 L810.8 60.2 L810.8 64.6 Z" fill="#333"/><path d="M839 58 V71" stroke="#333" stroke-width="2"/><path d="M835.8 60.2 L839 56 L842.2 60.2 Z M835.8 69 L839 73.2 L842.2 69 Z" fill="#333"/><path d="M846 60 V71.5 H862.5" stroke="#333" stroke-width="1" fill="none"/><path d="M848.5 68.5 L852.5 64.5 L854.7 66.6 L859.5 61.6" stroke="#333" stroke-width="1.8" fill="none"/><path d="M856.7 60.2 L861.1 60.2 L861.1 64.6 Z" fill="#333"/><path d="M881 58.6 H886.2 L893.6 66 L888.4 71.2 L881 63.8 Z" fill="#333"/><circle cx="883.4" cy="61" r="1" fill="#f5f5f5"/><path d="M896.3 65.3 h5 l-2.5 3 Z" fill="#333"/><path d="M938.3 58 V71.4 M945 58 V71.4 M934.4 61.6 H949 M934.4 67.8 H949" stroke="#333" stroke-width="2"/><path d="M990.6 70.6 L1000.2 61" stroke="#333" stroke-width="2.6" stroke-linecap="butt"/><path d="M998.6 62.6 L1000.6 60.6" stroke="#999" stroke-width="2.6"/><path d="M993.2 59.6 h1.6 M994 58.8 v1.6 M1002 64.6 h1.6 M1002.8 63.8 v1.6 M997 58.4 l.9 .9 M1001.6 59.2 l.9 -.9" stroke="#333" stroke-width=".8"/><path d="M1006.7 66.5 h5 l-2.5 3 Z" fill="#333"/><path d="M1050.2 68.2 L1053.2 58.8 L1056.2 68 L1058 64.4" stroke="#333" stroke-width="1.5" fill="none" stroke-linejoin="round"/><path d="M1058.6 65.4 L1060.4 66.4 L1061.8 69.4 L1063.6 68.2" stroke="#888" stroke-width="1" fill="none" stroke-dasharray="1.2 1.2"/><path d="M1059 62.6 l.01 0 M1061.4 64 l.01 0" stroke="#777" stroke-width="1.2" stroke-linecap="round"/><circle cx="1110.6" cy="63.6" r="4.6" fill="none" stroke="#333" stroke-width="1.8"/><path d="M1114 67.2 L1118.2 71.2" stroke="#333" stroke-width="2.4" stroke-linecap="round"/><path d="M1108.2 63.6 h4.8 M1110.6 61.2 v4.8" stroke="#333" stroke-width="1.1"/><path d="M1154.6 62.6 H1151.6 V70.4 H1164 V62.6 H1161" stroke="#333" stroke-width="1.4" fill="none"/><path d="M1157.8 67 V59.4" stroke="#333" stroke-width="1.5"/><path d="M1154.6 61 L1157.8 57.4 L1161 61 Z" fill="#333"/><path d="M1167.5 64.5 h5 l-2.5 3 Z" fill="#333"/><path d="M1205.8 59.4 C1209.6 59.4 1212.4 61 1212.4 63.2 C1212.4 65.4 1209.6 67 1205.8 67 C1204.8 67 1203.8 66.9 1203 66.7 C1202 67.8 1200.4 68.6 1199 68.7 C1199.8 68 1200.3 67 1200.4 66 C1199.6 65.2 1199.2 64.2 1199.2 63.2 C1199.2 61 1202 59.4 1205.8 59.4 Z" fill="none" stroke="#333" stroke-width="1.1"/><circle cx="1203.2" cy="63.2" r=".75" fill="#333"/><circle cx="1205.8" cy="63.2" r=".75" fill="#333"/><circle cx="1208.4" cy="63.2" r=".75" fill="#333"/></svg>
<div class="sep" style="left:705px"></div>
<div class="sep" style="left:1090px"></div>
<div class="sep" style="left:1138px"></div>
<div class="t" style="left:565.55px;top:69.90px;font-size:9.60px;color:#333;height:20px;line-height:20px;letter-spacing:-0.182px;">Calendar</div>
<div class="t" style="left:618.75px;top:69.90px;font-size:9.60px;color:#333;height:20px;line-height:20px;letter-spacing:-0.317px;">Chain</div>
<div class="t" style="left:657.90px;top:69.90px;font-size:9.60px;color:#333;height:20px;line-height:20px;letter-spacing:-0.317px;">Capsule</div>
<div class="t" style="left:720.60px;top:69.90px;font-size:9.60px;color:#333;height:20px;line-height:20px;letter-spacing:-0.396px;">One Lane</div>
<div class="t" style="left:775.00px;top:69.90px;font-size:9.60px;color:#333;height:20px;line-height:20px;letter-spacing:-0.549px;">One Y-Axis</div>
<div class="t" style="left:833.00px;top:69.90px;font-size:9.60px;color:#333;height:20px;line-height:20px;letter-spacing:-0.326px;">Spread</div>
<div class="t" style="left:877.50px;top:69.90px;font-size:9.60px;color:#333;height:20px;line-height:20px;letter-spacing:-0.215px;">Labels</div>
<div class="t" style="left:923.25px;top:70.80px;font-size:9.60px;color:#333;height:20px;line-height:20px;letter-spacing:-0.131px;">Gridlines</div>
<div class="t" style="left:980.25px;top:71.80px;font-size:9.60px;color:#333;height:20px;line-height:20px;letter-spacing:-0.082px;">Summary</div>
<div class="t" style="left:1038.25px;top:70.80px;font-size:9.60px;color:#333;height:20px;line-height:20px;letter-spacing:-0.053px;">Dimming</div>
<div class="t" style="left:1100.00px;top:69.70px;font-size:9.60px;color:#333;height:20px;line-height:20px;letter-spacing:-0.135px;">Zoom</div>
<div class="t" style="left:1148.25px;top:69.70px;font-size:9.60px;color:#333;height:20px;line-height:20px;letter-spacing:-0.041px;">Export</div>
<div class="t" style="left:1186.65px;top:69.70px;font-size:9.60px;color:#333;height:20px;line-height:20px;letter-spacing:-0.017px;">Annotate</div>
<svg style="left:0;top:0" width="1918" height="600" viewBox="0 0 1918 600"><rect x="518" y="125" width="1387" height="440" fill="#fafafa"/><rect x="518" y="106" width="5" height="6" fill="#1f9fdb"/><rect x="541" y="106" width="15.5" height="6" fill="#1f9fdb"/><rect x="575" y="106" width="17.6" height="6" fill="#1f9fdb"/><rect x="594" y="106" width="2" height="6" fill="#1f9fdb"/><rect x="609" y="106" width="15" height="6" fill="#1f9fdb"/><rect x="643" y="106" width="22" height="6" fill="#1f9fdb"/><rect x="676.7" y="106" width="15.3" height="6" fill="#1f9fdb"/><rect x="710.5" y="106" width="15.3" height="6" fill="#1f9fdb"/><rect x="744.2" y="106" width="15.4" height="6" fill="#1f9fdb"/><rect x="778" y="106" width="3.2" height="6" fill="#1f9fdb"/><rect x="783" y="106" width="1.4" height="6" fill="#1f9fdb"/><rect x="786.3" y="106" width="1.1" height="6" fill="#1f9fdb"/><rect x="791" y="106" width="1" height="6" fill="#1f9fdb"/><rect x="793.4" y="106" width="0.6" height="6" fill="#1f9fdb"/><rect x="811.8" y="106" width="15.8" height="6" fill="#1f9fdb"/><rect x="854.4" y="106" width="9.8" height="6" fill="#1f9fdb"/><rect x="888" y="106" width="10" height="6" fill="#1f9fdb"/><rect x="913.5" y="106" width="15.5" height="6" fill="#1f9fdb"/><rect x="947" y="106" width="16" height="6" fill="#1f9fdb"/><rect x="981" y="106" width="15.5" height="6" fill="#1f9fdb"/><rect x="1015" y="106" width="15.5" height="6" fill="#1f9fdb"/><rect x="1048.5" y="106" width="15.5" height="6" fill="#1f9fdb"/><rect x="1090.5" y="106" width="10" height="6" fill="#1f9fdb"/><rect x="1124.5" y="106" width="10" height="6" fill="#1f9fdb"/><rect x="1150.5" y="106" width="15.5" height="6" fill="#1f9fdb"/><rect x="1183.4" y="106" width="16.4" height="6" fill="#1f9fdb"/><rect x="1217" y="106" width="16.5" height="6" fill="#1f9fdb"/><rect x="1251" y="106" width="16.6" height="6" fill="#1f9fdb"/><rect x="1284.5" y="106" width="16.5" height="6" fill="#1f9fdb"/><rect x="1328.4" y="106" width="9.1" height="6" fill="#1f9fdb"/><rect x="1362" y="106" width="9.6" height="6" fill="#1f9fdb"/><rect x="1386" y="106" width="16.8" height="6" fill="#1f9fdb"/><rect x="1420" y="106" width="17" height="6" fill="#1f9fdb"/><rect x="1454" y="106" width="16.6" height="6" fill="#1f9fdb"/><rect x="1487.8" y="106" width="16.9" height="6" fill="#1f9fdb"/><rect x="1521.5" y="106" width="16.9" height="6" fill="#1f9fdb"/><rect x="1565.5" y="106" width="9.5" height="6" fill="#1f9fdb"/><rect x="1599.6" y="106" width="9" height="6" fill="#1f9fdb"/><rect x="1623" y="106" width="17" height="6" fill="#1f9fdb"/><rect x="1657" y="106" width="16.5" height="6" fill="#1f9fdb"/><rect x="1691" y="106" width="16.6" height="6" fill="#1f9fdb"/><rect x="1725" y="106" width="16" height="6" fill="#1f9fdb"/><rect x="1759" y="106" width="16.4" height="6" fill="#1f9fdb"/><rect x="1802" y="106" width="10" height="6" fill="#1f9fdb"/><rect x="1836" y="106" width="9.7" height="6" fill="#1f9fdb"/><rect x="1860" y="106" width="16.5" height="6" fill="#1f9fdb"/><rect x="1894" y="106" width="11" height="6" fill="#1f9fdb"/><rect x="594" y="112" width="26.4" height="6" fill="#f91800"/><rect x="779" y="112" width="47.6" height="6" fill="#f91800"/><rect x="1568.4" y="112" width="29.1" height="6" fill="#f91800"/><rect x="1807" y="112" width="29" height="6" fill="#f91800"/><rect x="779" y="118" width="48.2" height="6" fill="#1f8c4d"/><rect x="518" y="195" width="140" height="208" fill="rgb(16,107,193)" fill-opacity=".2"/><rect x="518" y="229" width="140" height="139.6" fill="rgb(16,107,193)" fill-opacity=".2"/><rect x="518" y="264" width="140" height="69.5" fill="rgb(16,107,193)" fill-opacity=".2"/><rect x="658" y="139" width="317" height="376.4" fill="rgb(16,107,193)" fill-opacity=".2"/><rect x="658" y="201" width="317" height="251" fill="rgb(16,107,193)" fill-opacity=".2"/><rect x="658" y="264" width="317" height="125.6" fill="rgb(16,107,193)" fill-opacity=".2"/><rect x="975" y="275" width="306" height="58.5" fill="rgb(16,107,193)" fill-opacity=".2"/><rect x="975" y="284.7" width="306" height="38.7" fill="rgb(16,107,193)" fill-opacity=".2"/><rect x="975" y="294.4" width="306" height="19.2" fill="rgb(16,107,193)" fill-opacity=".2"/><rect x="1281" y="225" width="316" height="174.7" fill="rgb(16,107,193)" fill-opacity=".2"/><rect x="1281" y="254" width="316" height="116.5" fill="rgb(16,107,193)" fill-opacity=".2"/><rect x="1281" y="283" width="316" height="58.5" fill="rgb(16,107,193)" fill-opacity=".2"/><rect x="1597" y="280" width="306.5" height="148.6" fill="rgb(16,107,193)" fill-opacity=".2"/><rect x="1597" y="304.6" width="306.5" height="99.1" fill="rgb(16,107,193)" fill-opacity=".2"/><rect x="1597" y="329.5" width="306.5" height="49.2" fill="rgb(16,107,193)" fill-opacity=".2"/><rect x="1903.5" y="259" width="1.5" height="131" fill="rgb(16,107,193)" fill-opacity=".2"/><rect x="1903.5" y="280" width="1.5" height="85" fill="rgb(16,107,193)" fill-opacity=".2"/><rect x="1903.5" y="300" width="1.5" height="45" fill="rgb(16,107,193)" fill-opacity=".2"/><rect x="779" y="124" width="48" height="441" fill="rgb(20,140,100)" fill-opacity=".14"/><path d="M779.3 124 V565 M826.8 124 V565" stroke="#7c97a8" stroke-width="1.8" fill="none" opacity=".9"/><path d="M779 124.5 H827 M779 565 H827" stroke="#9fb2ba" stroke-width="1.2"/><path d="M517 565.5 H1905" stroke="#c3d0e4" stroke-width="1"/><path d="M528.5 566 V571" stroke="#c3d0e4" stroke-width="1"/><path d="M599.5 566 V571" stroke="#c3d0e4" stroke-width="1"/><path d="M671.5 566 V571" stroke="#c3d0e4" stroke-width="1"/><path d="M742.5 566 V571" stroke="#c3d0e4" stroke-width="1"/><path d="M814.5 566 V571" stroke="#c3d0e4" stroke-width="1"/><path d="M885.5 566 V571" stroke="#c3d0e4" stroke-width="1"/><path d="M957.5 566 V571" stroke="#c3d0e4" stroke-width="1"/><path d="M1028.5 566 V571" stroke="#c3d0e4" stroke-width="1"/><path d="M1099.5 566 V571" stroke="#c3d0e4" stroke-width="1"/><path d="M1171.5 566 V571" stroke="#c3d0e4" stroke-width="1"/><path d="M1242.5 566 V571" stroke="#c3d0e4" stroke-width="1"/><path d="M1314.5 566 V571" stroke="#c3d0e4" stroke-width="1"/><path d="M1385.5 566 V571" stroke="#c3d0e4" stroke-width="1"/><path d="M1456.5 566 V571" stroke="#c3d0e4" stroke-width="1"/><path d="M1528.5 566 V571" stroke="#c3d0e4" stroke-width="1"/><path d="M1599.5 566 V571" stroke="#c3d0e4" stroke-width="1"/><path d="M1671.5 566 V571" stroke="#c3d0e4" stroke-width="1"/><path d="M1742.5 566 V571" stroke="#c3d0e4" stroke-width="1"/><path d="M1814.5 566 V571" stroke="#c3d0e4" stroke-width="1"/><path d="M1885.5 566 V571" stroke="#c3d0e4" stroke-width="1"/><path d="M517.5 124 V566" stroke="#5a5f66" stroke-width="1"/><path d="M518.0 312.3 L518.7 320.9 L519.5 300.7 L520.2 300.9 L520.9 307.3 L521.7 321.9 L522.4 319.2 L523.0 335.2 L523.5 344.3 L524.1 355.1 L524.7 362.4 L525.2 372.6 L525.8 378.2 L526.4 380.7 L526.9 389.7 L527.5 394.0 L528.1 396.8 L528.6 400.5 L529.2 402.2 L529.8 405.1 L530.3 410.8 L530.9 412.1 L531.5 415.9 L532.0 419.4 L532.6 421.6 L533.1 426.6 L533.7 429.6 L534.3 434.4 L534.8 436.1 L535.4 439.6 L536.0 442.0 L536.5 445.7 L537.1 447.8 L537.7 449.9 L538.2 456.0 L538.8 458.9 L539.4 461.2 L539.9 463.5 L540.5 464.6 L541.1 458.5 L541.7 452.2 L542.2 443.8 L542.8 439.0 L543.4 428.5 L544.0 421.5 L544.6 409.7 L545.2 402.7 L545.7 392.5 L546.3 378.9 L546.9 370.7 L547.5 365.3 L548.1 355.1 L548.6 350.2 L549.2 340.8 L549.8 332.0 L550.6 340.3 L551.4 321.3 L552.1 332.0 L552.9 317.5 L553.7 335.2 L554.5 318.9 L555.3 333.3 L556.0 326.6 L556.8 337.3 L557.6 333.7 L558.2 350.1 L558.7 357.6 L559.3 367.7 L559.8 374.2 L560.4 378.9 L560.9 386.5 L561.5 388.3 L562.1 394.7 L562.6 396.1 L563.2 400.9 L563.7 403.3 L564.3 406.6 L564.9 412.7 L565.4 414.9 L566.0 415.6 L566.5 420.9 L567.1 420.7 L567.6 424.2 L568.2 428.9 L568.8 430.6 L569.3 430.8 L569.9 437.3 L570.4 436.5 L571.0 439.3 L571.6 444.1 L572.1 444.7 L572.7 447.1 L573.2 448.6 L573.8 451.2 L574.3 455.9 L574.9 456.8 L575.5 451.0 L576.0 441.0 L576.6 431.3 L577.2 422.6 L577.7 408.4 L578.3 396.4 L578.9 385.3 L579.5 369.6 L580.0 357.5 L580.6 350.0 L581.2 339.5 L581.7 327.9 L582.3 317.2 L583.1 327.1 L583.9 306.1 L584.6 317.5 L585.4 304.3 L586.2 318.6 L587.0 307.3 L587.8 319.2 L588.5 314.1 L589.3 329.5 L590.1 320.4 L590.7 339.1 L591.2 350.1 L591.8 363.3 L592.3 371.2 L592.9 377.4 L593.5 383.5 L594.0 391.7 L594.6 394.1 L595.1 399.5 L595.7 405.5 L596.3 410.9 L596.8 413.9 L597.4 416.2 L597.9 422.7 L598.5 423.2 L599.0 425.9 L599.6 430.5 L600.2 434.6 L600.7 436.3 L601.3 440.2 L601.8 444.3 L602.4 448.5 L603.0 449.8 L603.5 454.0 L604.1 459.6 L604.6 463.2 L605.2 464.9 L605.8 468.3 L606.3 471.0 L606.9 472.2 L607.4 474.8 L608.0 477.7 L608.6 475.8 L609.1 467.8 L609.7 461.2 L610.2 448.0 L610.8 441.7 L611.3 431.1 L611.9 422.1 L612.4 409.7 L613.0 402.4 L613.5 387.5 L614.1 379.6 L614.6 370.7 L615.2 362.2 L615.7 352.8 L616.3 344.8 L616.8 338.2 L617.4 321.0 L618.2 333.3 L619.0 316.9 L619.7 331.5 L620.5 312.6 L621.3 329.0 L622.1 313.1 L622.9 331.5 L623.6 318.9 L624.4 334.3 L625.2 331.0 L625.8 348.8 L626.3 360.3 L626.9 374.1 L627.4 385.0 L628.0 392.5 L628.5 398.7 L629.1 403.3 L629.7 410.4 L630.2 414.7 L630.8 418.8 L631.3 425.0 L631.9 425.9 L632.5 432.8 L633.0 433.6 L633.6 439.9 L634.1 443.2 L634.7 445.7 L635.2 451.4 L635.8 454.2 L636.4 458.2 L636.9 463.1 L637.5 463.7 L638.0 466.1 L638.6 470.8 L639.2 475.9 L639.7 477.3 L640.3 480.5 L640.8 487.2 L641.4 489.5 L641.9 491.9 L642.5 496.9 L643.2 473.0 L643.8 452.4 L644.5 428.9 L645.1 402.4 L645.8 376.4 L646.4 349.5 L647.0 331.4 L647.5 311.6 L648.2 338.3 L648.8 309.3 L649.4 280.7 L650.0 254.0 L651.0 335.2 L651.7 289.3 L652.4 242.8 L653.2 263.6 L654.2 219.2 L655.0 262.8 L655.8 249.8 L656.4 274.2 L657.2 261.0 L658.0 277.7 L658.6 298.5 L659.2 318.0 L659.8 328.7 L660.4 341.9 L661.0 353.7 L661.6 359.8 L662.2 366.5 L662.8 374.3 L663.4 385.3 L664.0 390.3 L664.6 396.2 L665.1 399.1 L665.7 401.7 L666.3 406.8 L666.9 407.5 L667.4 411.4 L668.0 416.0 L668.6 417.9 L669.1 424.2 L669.7 425.5 L670.3 428.6 L670.9 431.7 L671.4 437.3 L672.0 440.1 L672.6 444.2 L673.1 447.7 L673.7 451.7 L674.3 455.7 L674.9 458.2 L675.4 459.9 L676.0 464.3 L676.6 455.4 L677.2 445.7 L677.8 437.9 L678.3 428.0 L678.9 413.6 L679.5 401.7 L680.1 389.5 L680.7 378.8 L681.3 366.1 L681.8 355.5 L682.4 346.1 L683.0 335.6 L683.6 319.9 L684.4 335.3 L685.2 319.2 L685.9 329.7 L686.7 310.2 L687.5 324.6 L688.3 312.8 L689.1 332.0 L689.8 318.7 L690.6 333.7 L691.4 330.3 L692.0 343.1 L692.5 354.1 L693.1 360.6 L693.6 368.6 L694.2 372.8 L694.7 380.4 L695.3 385.5 L695.9 389.0 L696.4 393.2 L697.0 394.5 L697.5 400.9 L698.1 404.5 L698.6 407.6 L699.2 408.6 L699.8 412.6 L700.3 413.4 L700.9 418.7 L701.4 421.2 L702.0 421.6 L702.6 423.1 L703.1 427.3 L703.7 430.4 L704.2 434.0 L704.8 435.3 L705.3 435.9 L705.9 441.8 L706.5 441.1 L707.0 446.8 L707.6 446.6 L708.1 449.8 L708.7 454.3 L709.2 453.9 L709.8 456.3 L710.4 452.7 L711.0 447.6 L711.5 441.4 L712.1 433.2 L712.7 426.4 L713.3 415.7 L713.8 409.1 L714.4 395.9 L715.0 387.4 L715.6 379.8 L716.1 369.8 L716.7 363.4 L717.3 355.0 L717.9 346.9 L718.4 341.7 L719.0 334.2 L719.6 323.3 L720.4 329.6 L721.2 311.4 L722.0 311.3 L722.9 311.7 L723.7 332.0 L724.5 328.9 L725.1 331.4 L725.6 336.5 L726.2 340.3 L726.7 344.6 L727.3 346.4 L727.9 353.7 L728.4 356.0 L729.0 359.5 L729.5 364.8 L730.1 367.9 L730.6 371.5 L731.2 376.2 L731.8 377.8 L732.3 383.4 L732.9 386.9 L733.4 392.7 L734.0 396.5 L734.6 396.9 L735.1 400.5 L735.7 402.0 L736.3 405.9 L736.9 410.0 L737.4 413.1 L738.0 414.3 L738.6 416.5 L739.2 418.8 L739.7 423.2 L740.3 427.0 L740.9 426.9 L741.5 432.1 L742.0 432.1 L742.6 435.5 L743.2 432.2 L743.8 430.5 L744.3 425.8 L744.9 422.5 L745.5 420.0 L746.1 421.0 L746.8 426.0 L747.4 426.6 L748.3 396.0 L749.2 429.1 L749.9 430.9 L750.5 434.1 L751.1 435.8 L751.8 437.6 L752.6 395.7 L753.4 432.1 L754.2 424.6 L755.0 418.5 L755.5 418.7 L756.1 417.3 L756.7 415.5 L757.2 415.3 L758.0 423.9 L758.7 434.3 L759.3 439.5 L760.0 448.9 L760.6 456.6 L761.2 462.0 L761.8 464.9 L762.5 469.9 L763.1 477.2 L763.7 479.7 L764.3 487.5 L764.9 499.5 L765.6 509.2 L766.2 522.1 L766.8 527.7 L767.4 529.9 L768.0 533.2 L768.6 533.5 L769.3 529.7 L770.0 535.7 L770.6 538.0 L771.3 543.7 L771.9 541.7 L772.5 536.3 L773.1 533.9 L773.7 532.7 L774.3 530.5 L774.9 538.0 L775.6 542.1 L776.2 550.8 L776.8 546.3 L777.4 539.9 L777.9 535.1 L778.5 527.9 L779.1 525.1 L779.6 522.9 L780.2 520.3 L780.8 519.8 L781.5 521.4 L782.3 523.2 L783.0 516.2 L783.6 510.8 L784.3 505.3 L785.0 502.0 L785.7 491.2 L786.4 479.5 L787.0 482.9 L787.6 489.2 L788.3 498.8 L788.9 503.5 L789.5 503.3 L790.2 500.4 L790.8 491.9 L791.4 483.1 L792.0 473.7 L792.6 465.4 L793.2 464.6 L793.9 468.4 L794.5 470.2 L795.1 472.7 L795.7 478.4 L796.2 484.3 L796.8 487.9 L797.4 491.9 L798.0 496.6 L798.6 502.6 L799.2 505.7 L799.8 507.7 L800.5 506.3 L801.1 504.8 L801.7 504.3 L802.4 502.4 L803.0 500.5 L803.6 502.2 L804.2 502.9 L804.8 505.6 L805.4 506.0 L805.9 505.1 L806.5 508.4 L807.1 508.9 L807.7 510.0 L808.3 509.5 L809.0 507.5 L809.6 508.7 L810.2 508.0 L810.9 506.8 L811.5 506.5 L812.1 490.7 L812.8 473.7 L813.4 465.5 L814.0 453.8 L814.7 445.4 L815.3 436.5 L815.9 423.5 L816.6 413.4 L817.2 403.1 L817.8 395.5 L818.4 386.6 L819.0 381.6 L819.6 374.6 L820.2 367.4 L820.8 362.6 L821.4 356.3 L822.0 350.1 L822.6 343.6 L823.2 348.7 L823.9 350.0 L824.5 344.0 L825.2 353.5 L826.0 333.5 L826.8 354.4 L827.5 353.0 L828.5 379.1 L829.1 391.0 L829.6 401.0 L830.2 412.9 L830.7 424.8 L831.3 435.2 L831.9 438.9 L832.5 444.4 L833.1 446.2 L833.8 449.2 L834.4 454.0 L835.0 455.7 L835.6 459.2 L836.2 459.8 L836.8 462.3 L837.4 461.5 L838.0 465.3 L838.6 467.8 L839.2 467.1 L839.8 472.1 L840.4 470.0 L841.1 471.7 L841.7 471.3 L842.3 473.1 L843.0 474.1 L843.6 472.7 L844.2 475.0 L844.8 472.2 L845.4 471.6 L846.0 471.0 L846.6 465.4 L847.1 460.4 L847.7 457.0 L848.3 451.9 L848.9 439.6 L849.6 429.8 L850.2 417.0 L850.8 403.4 L851.4 391.6 L852.0 378.4 L852.8 361.3 L853.6 346.0 L854.2 340.8 L854.9 339.0 L855.5 325.2 L856.2 333.4 L857.0 316.3 L857.7 315.1 L858.5 315.6 L859.2 332.3 L859.9 318.4 L860.7 335.8 L861.4 333.7 L862.0 348.0 L862.5 357.0 L863.1 364.0 L863.6 373.1 L864.2 378.2 L864.8 382.3 L865.3 384.6 L865.9 390.9 L866.4 393.8 L867.0 396.1 L867.6 398.7 L868.1 403.8 L868.7 405.0 L869.2 409.2 L869.8 412.9 L870.4 414.6 L870.9 416.4 L871.5 420.4 L872.1 422.3 L872.6 426.4 L873.2 427.8 L873.7 432.3 L874.3 434.6 L874.9 436.0 L875.4 436.3 L876.0 438.2 L876.5 444.0 L877.1 445.9 L877.7 447.6 L878.2 448.8 L878.8 450.8 L879.3 455.0 L879.9 456.8 L880.5 446.1 L881.0 433.0 L881.6 418.2 L882.2 398.7 L882.8 381.3 L883.3 367.2 L883.9 350.1 L884.5 334.6 L885.0 317.3 L885.6 305.1 L886.4 310.7 L887.2 296.8 L887.9 307.5 L888.7 290.8 L889.5 301.8 L890.3 296.6 L891.1 310.3 L891.8 297.5 L892.6 314.1 L893.4 308.0 L893.9 323.8 L894.5 334.9 L895.0 345.8 L895.6 356.2 L896.1 364.1 L896.7 367.2 L897.2 373.2 L897.8 381.4 L898.4 385.4 L898.9 390.4 L899.5 392.1 L900.0 396.9 L900.5 399.8 L901.1 405.8 L901.6 407.3 L902.2 411.9 L902.8 416.6 L903.3 416.9 L903.9 421.1 L904.4 425.1 L905.0 428.9 L905.5 429.8 L906.1 432.5 L906.6 434.3 L907.1 440.8 L907.7 440.2 L908.2 443.2 L908.8 448.2 L909.4 450.8 L909.9 454.6 L910.5 455.8 L911.0 460.8 L911.6 460.6 L912.1 464.0 L912.7 468.9 L913.2 469.0 L913.8 464.2 L914.3 459.7 L914.9 452.4 L915.5 442.6 L916.1 433.4 L916.6 425.5 L917.2 417.9 L917.8 406.5 L918.3 395.4 L918.9 388.2 L919.5 377.4 L920.0 369.2 L920.6 359.6 L921.2 350.1 L921.8 338.8 L922.3 332.2 L922.9 321.9 L923.5 314.8 L924.0 308.6 L924.6 293.6 L925.4 309.9 L926.2 292.8 L926.9 300.4 L927.7 285.2 L928.5 298.8 L929.3 289.2 L930.1 301.5 L930.8 292.1 L931.6 310.0 L932.4 303.5 L933.0 324.8 L933.5 338.8 L934.1 349.0 L934.6 361.3 L935.2 370.0 L935.7 374.4 L936.3 379.5 L936.8 387.3 L937.4 392.7 L937.9 397.7 L938.5 404.2 L939.0 407.3 L939.6 412.4 L940.2 413.4 L940.7 419.8 L941.3 425.0 L941.8 426.1 L942.4 430.1 L942.9 437.1 L943.5 441.8 L944.0 442.2 L944.6 448.6 L945.1 450.4 L945.7 457.0 L946.2 460.5 L946.8 462.5 L947.4 454.9 L947.9 448.6 L948.5 437.2 L949.1 427.2 L949.6 413.4 L950.2 400.8 L950.8 391.4 L951.3 378.0 L951.9 365.9 L952.5 356.0 L953.0 347.9 L953.6 331.3 L954.4 346.1 L955.2 327.7 L955.9 339.8 L956.7 322.1 L957.5 337.9 L958.3 322.1 L959.1 342.6 L959.8 325.4 L960.6 345.0 L961.4 339.5 L962.0 356.3 L962.5 369.2 L963.1 377.8 L963.6 386.4 L964.2 392.5 L964.8 401.5 L965.3 408.2 L965.9 410.5 L966.4 414.2 L967.0 418.6 L967.6 423.6 L968.1 426.9 L968.7 433.6 L969.2 433.1 L969.8 437.7 L970.3 440.2 L970.9 445.9 L971.5 449.7 L972.0 450.4 L972.6 453.1 L973.1 458.0 L973.7 461.7 L974.3 466.3 L974.8 465.5 L975.4 469.0 L975.9 472.4 L976.5 475.6 L977.1 478.7 L977.6 483.9 L978.2 486.4 L978.7 487.8 L979.3 490.5 L979.9 484.5 L980.4 476.6 L981.0 471.2 L981.6 460.1 L982.2 451.6 L982.7 442.7 L983.3 430.5 L983.9 418.5 L984.5 410.4 L985.0 399.4 L985.6 385.7 L986.2 376.0 L986.7 367.8 L987.3 355.9 L987.9 345.7 L988.5 336.7 L989.0 333.6 L989.6 316.2 L990.4 328.0 L991.2 312.5 L991.9 323.2 L992.7 307.9 L993.5 322.4 L994.3 312.0 L995.1 321.9 L995.8 314.4 L996.6 328.6 L997.4 326.3 L998.0 345.2 L998.5 359.7 L999.1 369.7 L999.6 379.6 L1000.2 388.6 L1000.8 395.6 L1001.3 404.7 L1001.9 408.9 L1002.5 414.7 L1003.0 421.2 L1003.6 422.7 L1004.1 428.3 L1004.7 431.0 L1005.3 437.9 L1005.8 438.7 L1006.4 446.3 L1007.0 450.4 L1007.5 454.2 L1008.1 454.9 L1008.6 459.6 L1009.2 465.4 L1009.8 466.5 L1010.3 471.9 L1010.9 475.7 L1011.5 481.6 L1012.0 483.7 L1012.6 488.6 L1013.1 489.8 L1013.7 495.8 L1014.3 485.8 L1014.9 478.8 L1015.4 464.3 L1016.0 456.3 L1016.6 440.8 L1017.2 429.2 L1017.8 415.5 L1018.4 399.9 L1018.9 389.2 L1019.5 373.1 L1020.1 359.9 L1020.7 346.3 L1021.3 335.8 L1021.8 326.0 L1022.4 317.8 L1023.0 303.0 L1023.8 313.7 L1024.6 299.1 L1025.3 305.9 L1026.1 291.5 L1026.9 307.2 L1027.7 292.6 L1028.5 305.5 L1029.2 298.7 L1030.0 314.7 L1030.8 307.4 L1031.4 329.6 L1031.9 345.4 L1032.5 356.7 L1033.0 372.0 L1033.6 380.4 L1034.1 385.9 L1034.7 394.9 L1035.2 399.9 L1035.8 406.1 L1036.3 412.4 L1036.9 416.5 L1037.5 421.6 L1038.0 426.6 L1038.6 432.4 L1039.1 435.0 L1039.7 439.2 L1040.2 445.8 L1040.8 448.3 L1041.3 455.3 L1041.9 457.7 L1042.5 462.6 L1043.0 465.0 L1043.6 471.2 L1044.1 472.0 L1044.7 476.3 L1045.2 480.1 L1045.8 486.7 L1046.3 490.8 L1046.9 492.4 L1047.4 497.3 L1048.0 503.3 L1048.6 494.8 L1049.2 484.1 L1049.7 475.4 L1050.3 464.9 L1050.9 453.9 L1051.5 443.6 L1052.0 430.0 L1052.6 421.6 L1053.2 406.6 L1053.8 394.5 L1054.4 382.7 L1054.9 371.2 L1055.5 359.9 L1056.1 346.9 L1056.7 336.4 L1057.2 327.6 L1057.8 317.3 L1058.4 306.4 L1059.2 317.5 L1060.0 296.5 L1060.7 312.4 L1061.5 294.6 L1062.3 305.1 L1063.1 298.6 L1063.9 311.6 L1064.6 300.5 L1065.4 314.0 L1066.2 311.8 L1066.8 327.8 L1067.3 341.2 L1067.9 351.2 L1068.4 358.5 L1069.0 363.5 L1069.5 372.2 L1070.1 378.1 L1070.7 381.4 L1071.2 384.9 L1071.8 389.7 L1072.3 391.9 L1072.9 398.1 L1073.5 402.9 L1074.0 404.2 L1074.6 408.5 L1075.1 412.3 L1075.7 412.7 L1076.2 419.2 L1076.8 420.9 L1077.4 422.1 L1077.9 424.7 L1078.5 428.5 L1079.0 433.0 L1079.6 436.6 L1080.2 438.0 L1080.7 443.6 L1081.3 444.1 L1081.8 447.5 L1082.4 449.0 L1082.9 455.6 L1083.5 454.8 L1084.1 438.7 L1084.8 411.2 L1085.4 382.0 L1086.0 352.7 L1086.7 325.5 L1087.3 297.3 L1088.1 314.2 L1088.9 292.3 L1089.6 305.7 L1090.4 289.5 L1091.2 301.7 L1092.0 289.2 L1092.8 305.5 L1093.5 295.6 L1094.3 313.8 L1095.1 305.5 L1095.7 323.2 L1096.2 334.0 L1096.8 344.6 L1097.3 354.3 L1097.9 365.7 L1098.4 372.4 L1099.0 377.2 L1099.5 381.1 L1100.1 387.7 L1100.6 392.6 L1101.2 395.3 L1101.7 400.3 L1102.3 405.1 L1102.8 405.4 L1103.4 409.8 L1103.9 414.5 L1104.5 416.5 L1105.1 420.9 L1105.6 425.1 L1106.2 426.6 L1106.7 431.3 L1107.3 433.4 L1107.8 437.9 L1108.4 440.0 L1108.9 444.5 L1109.5 445.0 L1110.0 450.9 L1110.6 451.6 L1111.1 458.3 L1111.7 459.8 L1112.2 462.2 L1112.8 465.0 L1113.3 468.9 L1113.9 472.2 L1114.4 475.5 L1115.0 478.6 L1115.6 471.1 L1116.2 466.4 L1116.7 457.6 L1117.3 448.8 L1117.9 437.2 L1118.4 427.3 L1119.0 417.5 L1119.6 408.5 L1120.2 396.1 L1120.8 385.7 L1121.3 375.3 L1121.9 368.0 L1122.5 356.4 L1123.0 347.1 L1123.6 343.1 L1124.2 326.3 L1125.0 341.2 L1125.8 322.8 L1126.5 335.7 L1127.3 318.1 L1128.1 329.0 L1128.9 323.6 L1129.7 335.8 L1130.4 325.0 L1131.2 339.6 L1132.0 333.8 L1132.6 352.6 L1133.1 364.3 L1133.7 373.0 L1134.2 381.6 L1134.8 389.1 L1135.3 394.5 L1135.9 399.1 L1136.4 407.7 L1137.0 412.4 L1137.5 415.2 L1138.1 420.0 L1138.6 421.8 L1139.2 427.1 L1139.7 428.0 L1140.3 433.8 L1140.9 436.3 L1141.4 441.1 L1142.0 440.8 L1142.5 447.1 L1143.1 447.4 L1143.6 452.4 L1144.2 457.3 L1144.7 456.3 L1145.3 460.5 L1145.8 463.8 L1146.4 467.0 L1146.9 468.9 L1147.5 475.7 L1148.0 478.3 L1148.6 479.5 L1149.2 473.3 L1149.7 467.6 L1150.3 457.4 L1150.8 449.0 L1151.4 444.2 L1151.9 431.9 L1152.5 423.0 L1153.0 414.9 L1153.6 404.8 L1154.2 392.1 L1154.7 380.6 L1155.3 371.2 L1155.8 364.7 L1156.4 355.6 L1156.9 344.0 L1157.5 339.5 L1158.0 330.3 L1158.6 318.6 L1159.4 326.4 L1160.2 309.9 L1160.9 326.6 L1161.7 307.3 L1162.5 319.1 L1163.3 307.4 L1164.1 322.2 L1164.8 317.0 L1165.6 331.2 L1166.4 324.2 L1167.0 344.4 L1167.5 357.9 L1168.1 368.2 L1168.6 374.7 L1169.2 384.8 L1169.8 392.5 L1170.3 396.2 L1170.9 399.8 L1171.4 405.3 L1172.0 410.2 L1172.5 416.2 L1173.1 418.1 L1173.7 422.0 L1174.2 426.1 L1174.8 431.7 L1175.3 436.0 L1175.9 437.8 L1176.5 442.7 L1177.0 447.2 L1177.6 449.5 L1178.1 451.4 L1178.7 455.2 L1179.2 461.4 L1179.8 463.7 L1180.4 465.4 L1180.9 470.4 L1181.5 471.4 L1182.0 478.7 L1182.6 479.7 L1183.2 473.5 L1183.8 465.8 L1184.3 454.9 L1184.9 448.1 L1185.5 436.4 L1186.0 425.5 L1186.6 417.1 L1187.2 402.3 L1187.8 391.9 L1188.3 383.1 L1188.9 369.9 L1189.5 359.9 L1190.1 351.7 L1190.6 341.4 L1191.2 337.2 L1191.8 318.5 L1192.6 329.0 L1193.4 316.5 L1194.1 328.4 L1194.9 311.4 L1195.7 324.9 L1196.5 316.0 L1197.3 329.4 L1198.0 316.8 L1198.8 332.2 L1199.6 329.3 L1200.2 347.4 L1200.7 360.0 L1201.3 371.1 L1201.8 381.9 L1202.4 389.1 L1203.0 395.2 L1203.5 403.2 L1204.1 405.2 L1204.7 412.8 L1205.2 414.8 L1205.8 421.1 L1206.3 423.6 L1206.9 428.6 L1207.5 433.9 L1208.0 437.8 L1208.6 441.5 L1209.1 442.7 L1209.7 447.4 L1210.3 449.8 L1210.8 454.9 L1211.4 458.1 L1211.9 459.5 L1212.5 465.4 L1213.1 469.4 L1213.6 472.2 L1214.2 476.9 L1214.8 477.2 L1215.3 480.4 L1215.9 483.2 L1216.4 488.6 L1217.0 491.7 L1217.6 485.0 L1218.2 476.4 L1218.7 470.3 L1219.3 457.3 L1219.9 451.1 L1220.4 438.6 L1221.0 427.3 L1221.6 417.1 L1222.2 403.0 L1222.8 391.4 L1223.3 381.4 L1223.9 369.8 L1224.5 361.6 L1225.0 354.4 L1225.6 346.2 L1226.2 334.4 L1227.0 343.8 L1227.8 330.0 L1228.5 339.7 L1229.3 321.2 L1230.1 333.3 L1230.9 323.1 L1231.7 342.2 L1232.4 326.6 L1233.2 340.8 L1234.0 339.0 L1234.6 354.3 L1235.1 365.6 L1235.7 378.6 L1236.2 382.5 L1236.8 391.2 L1237.4 398.2 L1237.9 404.3 L1238.5 405.2 L1239.0 410.8 L1239.6 416.1 L1240.1 416.7 L1240.7 421.2 L1241.3 427.6 L1241.8 427.7 L1242.4 432.1 L1242.9 434.9 L1243.5 438.7 L1244.1 440.3 L1244.6 443.3 L1245.2 450.6 L1245.7 452.7 L1246.3 455.6 L1246.8 456.4 L1247.4 459.6 L1248.0 463.9 L1248.5 465.5 L1249.1 469.5 L1249.6 474.5 L1250.2 474.9 L1250.8 468.0 L1251.4 463.2 L1251.9 452.5 L1252.5 440.0 L1253.1 431.3 L1253.7 421.4 L1254.3 407.1 L1254.8 396.8 L1255.4 386.9 L1256.0 376.2 L1256.6 363.9 L1257.2 354.8 L1257.8 343.0 L1258.3 333.8 L1258.9 328.1 L1259.5 313.8 L1260.3 325.4 L1261.1 309.3 L1261.8 316.6 L1262.6 301.8 L1263.4 313.5 L1264.2 306.8 L1265.0 318.0 L1265.7 309.1 L1266.5 322.8 L1267.3 319.4 L1267.9 336.7 L1268.4 347.0 L1269.0 357.3 L1269.5 362.3 L1270.1 369.7 L1270.6 374.2 L1271.2 382.0 L1271.8 385.2 L1272.3 389.1 L1272.9 391.9 L1273.4 396.3 L1274.0 400.2 L1274.6 404.2 L1275.1 409.8 L1275.7 412.1 L1276.2 413.3 L1276.8 416.8 L1277.3 419.0 L1277.9 425.5 L1278.5 425.9 L1279.0 430.7 L1279.6 433.4 L1280.1 437.2 L1280.7 436.2 L1281.3 440.4 L1281.8 443.6 L1282.4 445.1 L1282.9 451.5 L1283.5 451.9 L1284.0 456.7 L1284.6 458.4 L1285.2 450.2 L1285.8 445.0 L1286.3 436.6 L1286.9 427.2 L1287.5 418.7 L1288.0 411.2 L1288.6 398.6 L1289.2 389.8 L1289.8 380.3 L1290.3 370.9 L1290.9 359.4 L1291.5 353.1 L1292.1 342.5 L1292.6 337.1 L1293.2 329.9 L1293.8 319.1 L1294.6 324.9 L1295.4 312.4 L1296.1 322.8 L1296.9 305.2 L1297.7 322.1 L1298.5 310.3 L1299.3 322.1 L1300.0 313.5 L1300.8 325.7 L1301.6 321.2 L1302.2 335.3 L1302.7 349.2 L1303.3 358.1 L1303.8 366.9 L1304.4 374.3 L1304.9 377.0 L1305.5 383.7 L1306.1 389.4 L1306.6 390.5 L1307.2 396.4 L1307.7 400.0 L1308.3 404.7 L1308.8 407.6 L1309.4 408.0 L1310.0 412.9 L1310.5 413.5 L1311.1 418.0 L1311.6 420.8 L1312.2 422.2 L1312.8 426.5 L1313.3 429.1 L1313.9 432.6 L1314.4 434.5 L1315.0 436.7 L1315.5 440.6 L1316.1 443.6 L1316.7 445.0 L1317.2 449.9 L1317.8 450.7 L1318.3 452.8 L1318.9 456.6 L1319.4 459.6 L1320.0 460.9 L1320.6 455.6 L1321.2 447.5 L1321.7 436.9 L1322.3 426.6 L1322.9 411.7 L1323.5 401.3 L1324.0 388.8 L1324.6 375.1 L1325.2 365.1 L1325.8 352.5 L1326.3 344.7 L1326.9 336.4 L1327.5 322.2 L1328.3 331.1 L1329.1 318.0 L1329.8 323.3 L1330.6 311.3 L1331.4 325.4 L1332.2 315.4 L1333.0 330.2 L1333.7 320.1 L1334.5 332.9 L1335.3 329.1 L1335.9 344.3 L1336.4 352.5 L1337.0 362.3 L1337.6 371.3 L1338.1 376.9 L1338.7 381.7 L1339.2 386.5 L1339.8 389.9 L1340.4 393.9 L1340.9 397.0 L1341.5 402.9 L1342.1 406.4 L1342.6 407.4 L1343.2 412.8 L1343.7 411.9 L1344.3 415.3 L1344.9 419.8 L1345.4 421.7 L1346.0 424.8 L1346.5 430.2 L1347.1 429.3 L1347.7 432.2 L1348.2 435.1 L1348.8 439.8 L1349.4 440.5 L1349.9 442.1 L1350.5 447.1 L1351.0 449.1 L1351.6 451.0 L1352.2 454.8 L1352.7 458.1 L1353.3 460.2 L1353.9 447.1 L1354.4 433.6 L1355.0 421.2 L1355.5 408.4 L1356.1 392.7 L1356.7 379.4 L1357.2 368.1 L1357.8 352.7 L1358.3 340.8 L1358.9 327.4 L1359.4 314.0 L1360.0 301.7 L1360.8 288.1 L1361.6 272.6 L1362.3 287.3 L1363.0 300.0 L1363.6 302.4 L1364.2 303.8 L1364.9 305.6 L1365.5 300.2 L1366.2 311.9 L1367.0 296.7 L1367.7 290.5 L1368.5 290.8 L1369.2 304.8 L1369.9 299.9 L1370.7 309.6 L1371.4 306.8 L1372.0 327.1 L1372.5 337.7 L1373.1 349.7 L1373.6 359.6 L1374.2 365.5 L1374.7 370.2 L1375.3 378.8 L1375.8 383.7 L1376.4 384.7 L1376.9 389.9 L1377.5 395.1 L1378.0 400.4 L1378.6 402.4 L1379.2 407.6 L1379.7 409.3 L1380.3 415.0 L1380.8 416.9 L1381.4 420.5 L1381.9 425.9 L1382.5 429.8 L1383.0 433.2 L1383.6 435.6 L1384.1 438.4 L1384.7 443.1 L1385.2 446.1 L1385.8 450.6 L1386.4 444.3 L1387.0 433.9 L1387.5 427.2 L1388.1 419.8 L1388.7 408.3 L1389.3 398.1 L1389.9 387.0 L1390.4 379.2 L1391.0 370.4 L1391.6 360.2 L1392.2 346.3 L1392.8 339.5 L1393.4 329.5 L1393.9 322.5 L1394.5 314.3 L1395.1 298.9 L1395.9 315.9 L1396.7 299.5 L1397.4 308.2 L1398.2 290.1 L1399.0 303.4 L1399.8 292.0 L1400.6 312.5 L1401.3 300.5 L1402.1 311.9 L1402.9 306.5 L1403.5 323.7 L1404.0 335.1 L1404.6 344.1 L1405.1 351.7 L1405.7 360.6 L1406.2 366.6 L1406.8 369.3 L1407.4 374.4 L1407.9 379.6 L1408.5 384.2 L1409.0 388.9 L1409.6 389.8 L1410.2 394.6 L1410.7 397.2 L1411.3 401.6 L1411.8 401.9 L1412.4 405.1 L1412.9 407.9 L1413.5 414.5 L1414.1 414.5 L1414.6 418.5 L1415.2 419.9 L1415.7 423.7 L1416.3 425.3 L1416.9 430.6 L1417.4 431.6 L1418.0 436.6 L1418.5 437.9 L1419.1 440.5 L1419.6 444.5 L1420.2 446.8 L1420.8 440.9 L1421.3 433.7 L1421.9 426.8 L1422.5 423.1 L1423.1 412.1 L1423.7 402.3 L1424.2 393.8 L1424.8 386.1 L1425.4 379.4 L1425.9 366.6 L1426.5 361.1 L1427.1 351.1 L1427.7 343.1 L1428.2 338.0 L1428.8 329.9 L1429.4 321.5 L1430.2 327.2 L1431.0 307.3 L1431.8 307.8 L1432.7 308.9 L1433.5 331.7 L1434.3 324.8 L1434.9 329.7 L1435.4 332.9 L1436.0 334.4 L1436.6 337.4 L1437.1 341.4 L1437.7 344.8 L1438.3 348.1 L1438.8 352.7 L1439.4 357.6 L1440.0 359.5 L1440.5 363.8 L1441.1 365.5 L1441.6 369.7 L1442.2 376.0 L1442.8 376.1 L1443.3 381.4 L1443.9 386.0 L1444.5 389.4 L1445.0 392.8 L1445.6 395.1 L1446.2 400.0 L1446.7 403.7 L1447.3 407.0 L1447.9 425.2 L1448.5 439.5 L1449.2 460.0 L1449.8 475.4 L1450.4 494.0 L1451.0 509.8 L1451.6 508.9 L1452.2 502.4 L1452.8 501.1 L1453.4 496.6 L1454.0 493.9 L1454.6 490.5 L1455.2 490.9 L1455.8 490.8 L1456.4 488.5 L1457.0 488.8 L1457.6 487.1 L1458.2 486.2 L1458.8 485.1 L1459.4 479.6 L1460.0 475.4 L1460.6 472.8 L1461.2 470.9 L1461.8 465.6 L1462.4 464.2 L1463.0 460.1 L1463.6 457.1 L1464.2 447.3 L1464.7 438.9 L1465.3 431.0 L1465.9 423.7 L1466.5 415.9 L1467.0 406.3 L1467.6 400.0 L1468.3 358.5 L1468.9 400.2 L1469.5 443.1 L1470.1 486.6 L1470.7 476.8 L1471.3 472.1 L1472.0 463.0 L1472.6 457.4 L1473.2 457.3 L1473.7 462.6 L1474.3 462.8 L1474.9 466.9 L1475.4 466.5 L1476.0 469.3 L1476.6 472.6 L1477.2 472.9 L1477.7 475.4 L1478.3 479.1 L1478.9 482.2 L1479.4 482.2 L1480.0 483.9 L1480.6 485.4 L1481.2 488.6 L1481.8 486.5 L1482.3 489.2 L1482.9 489.1 L1483.5 491.0 L1484.1 490.4 L1484.7 492.8 L1485.2 494.6 L1485.8 495.4 L1486.4 495.5 L1487.0 496.0 L1487.6 485.3 L1488.1 469.7 L1488.7 457.7 L1489.2 440.0 L1489.8 421.1 L1490.4 404.3 L1490.9 386.1 L1491.5 370.5 L1492.0 356.3 L1492.6 339.3 L1493.4 350.9 L1494.2 334.1 L1494.9 341.3 L1495.7 328.7 L1496.5 343.6 L1497.3 331.0 L1498.1 350.1 L1498.8 338.3 L1499.6 350.9 L1500.4 348.8 L1501.0 361.1 L1501.5 370.0 L1502.1 380.8 L1502.6 389.6 L1503.2 393.5 L1503.7 401.3 L1504.3 403.1 L1504.8 411.4 L1505.4 413.4 L1506.0 416.1 L1506.5 422.4 L1507.1 424.9 L1507.6 429.4 L1508.2 432.1 L1508.7 435.0 L1509.3 436.6 L1509.8 441.6 L1510.4 440.3 L1511.0 446.7 L1511.5 448.7 L1512.1 449.4 L1512.6 454.5 L1513.2 455.6 L1513.7 458.6 L1514.3 462.6 L1514.8 462.3 L1515.4 465.2 L1516.0 469.4 L1516.5 469.5 L1517.1 474.1 L1517.6 477.7 L1518.2 478.9 L1518.7 480.3 L1519.3 485.3 L1519.8 488.1 L1520.4 490.3 L1521.0 482.4 L1521.5 476.1 L1522.1 466.6 L1522.7 453.6 L1523.2 444.0 L1523.8 431.5 L1524.4 419.7 L1524.9 409.5 L1525.5 400.4 L1526.1 389.1 L1526.6 375.0 L1527.2 365.4 L1527.8 357.4 L1528.3 351.7 L1528.9 335.6 L1529.7 349.7 L1530.5 333.8 L1531.2 344.6 L1532.0 325.4 L1532.8 342.1 L1533.6 326.6 L1534.4 341.4 L1535.1 331.1 L1535.9 347.2 L1536.7 341.0 L1537.3 361.3 L1537.8 376.3 L1538.4 390.3 L1539.0 399.4 L1539.5 409.9 L1540.1 418.2 L1540.7 423.0 L1541.2 429.1 L1541.8 437.3 L1542.4 441.6 L1542.9 445.2 L1543.5 449.8 L1544.1 458.0 L1544.6 460.9 L1545.2 464.0 L1545.8 467.4 L1546.3 474.9 L1546.9 477.5 L1547.4 481.6 L1548.0 483.8 L1548.6 487.4 L1549.1 491.6 L1549.7 494.1 L1550.3 500.0 L1550.8 502.7 L1551.4 508.1 L1552.0 510.0 L1552.5 513.8 L1553.1 517.6 L1553.7 523.2 L1554.2 524.1 L1554.8 529.3 L1555.4 530.7 L1555.9 535.8 L1556.5 538.0 L1557.1 533.7 L1557.7 522.6 L1558.2 515.9 L1558.8 504.6 L1559.4 492.4 L1560.0 483.1 L1560.5 468.5 L1561.1 458.3 L1561.7 445.9 L1562.3 434.1 L1562.9 421.8 L1563.4 414.1 L1564.0 405.2 L1564.6 392.9 L1565.4 406.1 L1566.2 388.2 L1566.9 398.6 L1567.7 380.9 L1568.5 394.8 L1569.3 386.8 L1570.1 402.3 L1570.8 390.1 L1571.6 403.1 L1572.4 398.4 L1573.0 417.0 L1573.5 429.9 L1574.1 439.1 L1574.6 447.5 L1575.2 452.8 L1575.7 462.6 L1576.3 464.6 L1576.8 470.8 L1577.4 475.5 L1577.9 481.3 L1578.5 485.1 L1579.0 487.6 L1579.6 493.7 L1580.1 497.6 L1580.7 497.0 L1581.3 503.2 L1581.8 505.9 L1582.4 508.8 L1582.9 512.6 L1583.5 515.2 L1584.0 520.1 L1584.6 523.0 L1585.1 527.9 L1585.7 531.1 L1586.2 534.4 L1586.8 534.9 L1587.3 540.0 L1587.9 542.4 L1588.4 545.7 L1589.0 549.8 L1589.5 530.4 L1590.1 515.9 L1590.7 499.6 L1591.2 484.6 L1591.8 467.0 L1592.3 453.8 L1592.9 435.0 L1593.4 419.5 L1594.0 360.7 L1594.6 370.6 L1595.2 380.9 L1596.3 415.0 L1596.9 398.3 L1597.5 374.9 L1598.2 383.0 L1599.0 364.4 L1599.8 386.3 L1600.5 383.4 L1601.0 382.7 L1601.6 379.5 L1602.2 379.9 L1602.7 377.4 L1603.2 379.6 L1603.8 379.0 L1604.3 378.0 L1604.9 374.0 L1605.5 374.3 L1606.0 374.1 L1606.6 379.2 L1607.1 382.7 L1607.7 390.2 L1608.3 393.6 L1608.8 399.4 L1609.4 403.0 L1610.0 409.7 L1610.5 413.2 L1611.1 418.1 L1611.7 424.7 L1612.2 429.0 L1612.8 435.8 L1613.4 439.0 L1613.9 444.6 L1614.5 448.4 L1615.1 454.1 L1615.6 460.0 L1616.2 465.4 L1616.8 470.1 L1617.3 476.6 L1617.9 479.0 L1618.5 486.7 L1619.0 489.3 L1619.6 497.3 L1620.2 500.8 L1620.7 505.4 L1621.3 511.2 L1621.9 517.2 L1622.4 522.6 L1623.0 525.6 L1623.6 518.0 L1624.2 512.3 L1624.7 508.4 L1625.3 500.2 L1625.9 491.8 L1626.5 480.2 L1627.0 472.8 L1627.6 460.9 L1628.2 451.6 L1628.8 442.9 L1629.4 436.6 L1629.9 425.8 L1630.5 417.9 L1631.1 405.7 L1631.7 399.7 L1632.2 391.0 L1632.8 385.5 L1633.4 377.1 L1634.2 387.8 L1635.0 369.9 L1635.7 379.0 L1636.5 363.7 L1637.3 380.5 L1638.1 365.6 L1638.9 381.4 L1639.6 367.3 L1640.4 384.8 L1641.2 380.1 L1641.8 401.1 L1642.3 413.3 L1642.9 425.1 L1643.4 434.6 L1644.0 442.5 L1644.5 448.7 L1645.1 454.9 L1645.6 460.4 L1646.2 463.5 L1646.7 471.7 L1647.3 472.7 L1647.8 479.1 L1648.4 483.3 L1649.0 486.8 L1649.5 490.0 L1650.1 493.4 L1650.6 498.5 L1651.2 502.1 L1651.7 506.7 L1652.3 509.4 L1652.8 515.5 L1653.4 518.1 L1653.9 519.7 L1654.5 525.2 L1655.0 531.4 L1655.6 530.6 L1656.2 527.6 L1656.7 522.8 L1657.3 512.5 L1657.9 505.6 L1658.5 495.8 L1659.0 486.3 L1659.6 478.2 L1660.2 468.2 L1660.8 456.9 L1661.3 447.8 L1661.9 438.0 L1662.5 429.6 L1663.0 417.0 L1663.6 408.5 L1664.2 401.2 L1664.8 393.9 L1665.3 389.9 L1665.9 376.5 L1666.7 388.9 L1667.5 371.0 L1668.2 379.1 L1669.0 364.1 L1669.8 382.3 L1670.6 365.3 L1671.4 381.8 L1672.1 373.1 L1672.9 389.4 L1673.7 383.9 L1674.3 395.1 L1674.8 401.7 L1675.4 412.2 L1675.9 415.2 L1676.5 422.9 L1677.1 427.0 L1677.6 432.6 L1678.2 434.8 L1678.8 435.4 L1679.3 442.5 L1679.9 444.5 L1680.4 446.5 L1681.0 446.7 L1681.6 452.5 L1682.1 453.6 L1682.7 457.3 L1683.3 461.1 L1683.8 463.2 L1684.4 461.9 L1684.9 467.4 L1685.5 468.3 L1686.1 472.0 L1686.6 472.7 L1687.2 475.3 L1687.8 477.6 L1688.3 478.5 L1688.9 481.6 L1689.4 485.8 L1690.0 484.9 L1690.6 481.3 L1691.2 480.3 L1691.7 474.7 L1692.3 468.9 L1692.9 461.2 L1693.5 455.3 L1694.0 450.0 L1694.6 446.6 L1695.2 438.1 L1695.8 433.1 L1696.3 422.9 L1696.9 417.2 L1697.5 411.1 L1698.1 406.1 L1698.6 396.4 L1699.2 394.1 L1699.8 386.6 L1700.4 379.2 L1700.9 376.3 L1701.5 371.7 L1702.1 360.5 L1702.9 375.2 L1703.7 356.1 L1704.4 367.8 L1705.2 351.0 L1706.0 361.9 L1706.8 351.8 L1707.6 366.4 L1708.3 357.0 L1709.1 370.8 L1709.9 367.7 L1710.5 380.9 L1711.0 392.2 L1711.6 401.6 L1712.1 408.1 L1712.7 413.2 L1713.2 418.9 L1713.8 424.4 L1714.3 426.2 L1714.9 430.8 L1715.4 433.8 L1716.0 439.3 L1716.5 439.6 L1717.1 444.2 L1717.7 445.2 L1718.2 448.3 L1718.8 453.2 L1719.3 455.4 L1719.9 456.9 L1720.4 458.8 L1721.0 465.0 L1721.5 465.8 L1722.1 470.0 L1722.6 471.5 L1723.2 475.1 L1723.7 477.5 L1724.3 482.3 L1724.9 477.5 L1725.4 470.2 L1726.0 464.7 L1726.6 457.3 L1727.2 453.2 L1727.7 443.0 L1728.3 436.6 L1728.9 431.6 L1729.4 420.1 L1730.0 415.6 L1730.6 407.4 L1731.2 399.9 L1731.7 391.8 L1732.3 384.3 L1732.9 382.0 L1733.5 375.4 L1734.0 370.5 L1734.6 360.8 L1735.4 370.4 L1736.2 354.3 L1736.9 360.5 L1737.7 346.9 L1738.5 358.2 L1739.3 347.8 L1740.1 365.6 L1740.8 351.0 L1741.6 372.2 L1742.4 365.4 L1743.0 376.4 L1743.5 388.4 L1744.1 395.0 L1744.6 399.4 L1745.2 407.1 L1745.7 411.1 L1746.3 413.0 L1746.9 416.6 L1747.4 418.9 L1748.0 424.3 L1748.5 426.0 L1749.1 429.1 L1749.6 431.6 L1750.2 433.8 L1750.8 438.0 L1751.3 439.6 L1751.9 442.2 L1752.4 444.7 L1753.0 448.2 L1753.5 452.3 L1754.1 451.6 L1754.7 457.2 L1755.2 459.6 L1755.8 460.9 L1756.3 463.0 L1756.9 466.3 L1757.4 467.8 L1758.0 470.8 L1758.6 467.2 L1759.2 460.9 L1759.7 452.2 L1760.3 444.4 L1760.9 441.4 L1761.5 430.9 L1762.1 424.8 L1762.7 413.9 L1763.2 406.7 L1763.8 398.0 L1764.4 391.7 L1765.0 385.0 L1765.6 375.5 L1766.2 369.0 L1766.7 361.8 L1767.3 355.7 L1767.9 342.3 L1768.7 351.2 L1769.5 334.5 L1770.3 334.9 L1771.2 341.4 L1772.0 355.7 L1772.8 350.7 L1773.4 358.2 L1773.9 360.0 L1774.5 366.4 L1775.1 367.8 L1775.6 374.3 L1776.2 376.4 L1776.7 380.6 L1777.3 386.9 L1777.9 392.7 L1778.4 395.9 L1779.0 400.9 L1779.6 404.9 L1780.1 408.3 L1780.7 411.0 L1781.3 416.9 L1781.8 420.0 L1782.4 425.6 L1783.0 429.3 L1783.5 434.1 L1784.1 437.3 L1784.6 443.5 L1785.2 446.8 L1785.8 451.3 L1786.3 454.2 L1786.9 460.0 L1787.5 460.7 L1788.0 462.7 L1788.6 461.7 L1789.1 460.7 L1789.7 461.8 L1790.2 462.4 L1790.8 464.2 L1791.3 465.6 L1791.9 466.2 L1792.4 466.6 L1793.0 467.0 L1793.6 465.3 L1794.1 464.1 L1794.7 459.3 L1795.3 459.5 L1795.9 458.3 L1796.4 457.2 L1797.0 455.4 L1797.8 418.2 L1798.5 382.1 L1799.1 410.1 L1799.8 442.8 L1800.4 475.5 L1801.0 503.3 L1801.6 482.4 L1802.2 463.8 L1802.9 442.9 L1803.5 418.1 L1803.5 421.3 L1804.2 430.0 L1805.0 409.5 L1805.7 406.9 L1806.5 407.2 L1807.2 419.9 L1807.9 415.9 L1808.7 430.7 L1809.4 426.7 L1810.0 434.9 L1810.5 440.0 L1811.1 445.3 L1811.6 450.0 L1812.2 452.6 L1812.7 459.3 L1813.3 460.1 L1813.9 464.3 L1814.4 466.6 L1815.0 468.1 L1815.5 471.8 L1816.1 472.9 L1816.7 474.0 L1817.2 478.8 L1817.8 477.6 L1818.3 479.3 L1818.9 481.6 L1819.4 484.5 L1820.0 487.6 L1820.6 487.4 L1821.1 488.7 L1821.7 492.3 L1822.2 492.3 L1822.8 495.2 L1823.4 495.8 L1823.9 500.2 L1824.5 498.9 L1825.0 500.8 L1825.6 502.8 L1826.1 504.6 L1826.7 507.8 L1827.3 495.7 L1827.9 484.3 L1828.5 471.5 L1829.1 457.9 L1829.6 448.5 L1830.2 434.7 L1830.8 422.8 L1831.4 411.6 L1832.0 401.8 L1832.6 382.3 L1833.2 364.9 L1833.8 349.6 L1834.4 332.6 L1835.0 313.2 L1835.8 320.5 L1836.5 331.0 L1837.1 353.4 L1837.6 374.2 L1838.2 398.2 L1838.7 419.2 L1839.3 441.2 L1839.8 446.3 L1840.4 450.8 L1841.0 453.9 L1841.5 459.1 L1842.0 460.1 L1842.6 465.9 L1843.1 469.4 L1843.7 472.3 L1844.2 479.3 L1844.8 480.5 L1845.4 481.1 L1845.9 483.8 L1846.5 484.4 L1847.1 484.7 L1847.6 482.9 L1848.2 485.3 L1848.7 482.8 L1849.3 485.2 L1849.9 486.3 L1850.4 484.0 L1851.0 484.1 L1851.6 490.0 L1852.2 494.7 L1852.7 498.1 L1853.3 502.8 L1853.9 505.0 L1854.5 508.6 L1855.1 511.7 L1855.7 516.1 L1856.2 522.5 L1856.8 523.3 L1857.4 527.3 L1858.0 521.8 L1858.5 513.4 L1859.1 506.9 L1859.6 497.8 L1860.2 488.4 L1860.7 480.8 L1861.3 470.7 L1861.8 460.4 L1862.4 450.7 L1863.0 438.8 L1863.5 430.0 L1864.1 415.2 L1864.6 405.4 L1865.2 394.6 L1865.7 386.1 L1866.3 379.2 L1866.8 371.6 L1867.4 361.8 L1867.9 353.1 L1868.5 343.1 L1869.3 352.8 L1870.1 337.6 L1870.8 348.6 L1871.6 330.6 L1872.4 345.5 L1873.2 331.1 L1874.0 348.7 L1874.7 339.9 L1875.5 356.2 L1876.3 350.6 L1876.9 362.1 L1877.4 377.6 L1878.0 386.0 L1878.5 392.8 L1879.1 400.3 L1879.6 406.5 L1880.2 414.3 L1880.8 416.9 L1881.3 420.5 L1881.9 425.5 L1882.4 432.0 L1883.0 434.4 L1883.6 438.7 L1884.1 441.3 L1884.7 443.4 L1885.2 446.0 L1885.8 450.6 L1886.3 452.6 L1886.9 456.8 L1887.5 461.5 L1888.0 463.5 L1888.6 467.1 L1889.1 470.8 L1889.7 472.5 L1890.3 475.8 L1890.8 481.1 L1891.4 482.8 L1891.9 485.1 L1892.5 488.6 L1893.0 491.2 L1893.6 493.6 L1894.2 488.4 L1894.7 475.6 L1895.3 468.2 L1895.9 455.9 L1896.4 443.3 L1897.0 426.6 L1897.6 414.8 L1898.2 403.8 L1898.7 387.8 L1899.3 375.3 L1899.9 367.2 L1900.4 355.4 L1901.0 341.4 L1901.8 345.6 L1902.7 330.4 L1903.6 347.2 L1904.4 348.6" stroke="#1a74c6" stroke-width="1.15" fill="none" stroke-linejoin="round"/><path d="M518.8 286.5 V324.5 H552 V299.5 H594 V384 H620.8 V310 H685.2 V308.2 H722 V287.2 H751.4 V335.3 H779 V515.8 H783.2 V501.3 H787 V477.5 H792.3 V453.2 H826.6 V333.5 H857 V302.8 H890 V260 H928.4 V283.6 H955.5 V318.3 H993 V305.3 H1024.6 V287.6 H1061.4 V293.7 H1094.4 V299 H1127 V315.4 H1160 V304.6 H1194.5 V308.9 H1231 V318.3 H1262 V299.1 H1297.2 V304.6 H1330.9 V308.5 H1365.2 V279.2 H1395.6 V280.7 H1434.7 V287.6 H1466.5 V347.2 H1499.8 V321.6 H1534 V319.8 H1568 V378 H1599.5 V361.3 H1636.8 V342.5 H1672.2 V359.5 H1706.6 V335.7 H1739 V341.5 H1770.3 V330.6 H1806.8 V405.8 H1835.7 V387.7 H1871.5 V326.6 H1904.4" stroke="#0c2d6b" stroke-width="1.1" fill="none"/><path d="M1904.5 259 V330" stroke="#1a74c6" stroke-width="1" opacity=".8"/><path d="M718.5 112 V565" stroke="#7f9fc6" stroke-width="1" opacity=".75"/><circle cx="717.6" cy="343.5" r="3.2" fill="#fff" stroke="#1a74c6" stroke-width="1"/><g transform="translate(0 2)"><path d="M797 130.6 C800.6 130.6 803.4 132 803.4 134 C803.4 136 800.6 137.4 797 137.4 C796 137.4 795 137.3 794.2 137.1 C793.2 138.2 791.8 139 790.4 139.1 C791.2 138.4 791.6 137.6 791.6 136.6 C790.9 135.9 790.6 135 790.6 134 C790.6 132 793.4 130.6 797 130.6 Z" fill="none" stroke="#8a9c9c" stroke-width="1"/><path d="M794.6 134 h.01 M797 134 h.01 M799.4 134 h.01" stroke="#8a9c9c" stroke-width="1.1" stroke-linecap="round"/></g><path d="M814 129 L822 137 M822 129 L814 137" stroke="#9aa5a3" stroke-width="2.6"/></svg>
<div class="t" style="left:492.21px;top:178.00px;font-size:11.50px;color:#777;height:20px;line-height:20px;letter-spacing:0.700px;">120</div>
<div class="t" style="left:493.07px;top:243.00px;font-size:11.50px;color:#777;height:20px;line-height:20px;letter-spacing:0.700px;">110</div>
<div class="t" style="left:492.21px;top:309.00px;font-size:11.50px;color:#777;height:20px;line-height:20px;letter-spacing:0.700px;">100</div>
<div class="t" style="left:499.31px;top:375.00px;font-size:11.50px;color:#777;height:20px;line-height:20px;letter-spacing:0.700px;">90</div>
<div class="t" style="left:499.31px;top:440.00px;font-size:11.50px;color:#777;height:20px;line-height:20px;letter-spacing:0.700px;">80</div>
<div class="t" style="left:499.31px;top:506.00px;font-size:11.50px;color:#777;height:20px;line-height:20px;letter-spacing:0.700px;">70</div>
<div class="t" style="left:509.32px;top:571.50px;font-size:12.00px;color:#777;height:20px;line-height:20px;">Feb 17</div>
<div class="t" style="left:580.74px;top:571.50px;font-size:12.00px;color:#777;height:20px;line-height:20px;">Feb 24</div>
<div class="t" style="left:655.50px;top:571.50px;font-size:12.00px;color:#777;height:20px;line-height:20px;">Mar 2</div>
<div class="t" style="left:726.92px;top:571.50px;font-size:12.00px;color:#777;height:20px;line-height:20px;">Mar 9</div>
<div class="t" style="left:795.01px;top:571.50px;font-size:12.00px;color:#777;height:20px;line-height:20px;">Mar 16</div>
<div class="t" style="left:866.43px;top:571.50px;font-size:12.00px;color:#777;height:20px;line-height:20px;">Mar 23</div>
<div class="t" style="left:937.85px;top:571.50px;font-size:12.00px;color:#777;height:20px;line-height:20px;">Mar 30</div>
<div class="t" style="left:1013.60px;top:571.50px;font-size:12.00px;color:#777;height:20px;line-height:20px;">Apr 6</div>
<div class="t" style="left:1081.68px;top:571.50px;font-size:12.00px;color:#777;height:20px;line-height:20px;">Apr 13</div>
<div class="t" style="left:1153.10px;top:571.50px;font-size:12.00px;color:#777;height:20px;line-height:20px;">Apr 20</div>
<div class="t" style="left:1224.52px;top:571.50px;font-size:12.00px;color:#777;height:20px;line-height:20px;">Apr 27</div>
<div class="t" style="left:1297.28px;top:571.50px;font-size:12.00px;color:#777;height:20px;line-height:20px;">May 4</div>
<div class="t" style="left:1365.81px;top:571.50px;font-size:12.00px;color:#777;height:20px;line-height:20px;">May 11</div>
<div class="t" style="left:1436.78px;top:571.50px;font-size:12.00px;color:#777;height:20px;line-height:20px;">May 18</div>
<div class="t" style="left:1508.20px;top:571.50px;font-size:12.00px;color:#777;height:20px;line-height:20px;">May 25</div>
<div class="t" style="left:1584.62px;top:571.50px;font-size:12.00px;color:#777;height:20px;line-height:20px;">Jun 1</div>
<div class="t" style="left:1656.04px;top:571.50px;font-size:12.00px;color:#777;height:20px;line-height:20px;">Jun 8</div>
<div class="t" style="left:1724.13px;top:571.50px;font-size:12.00px;color:#777;height:20px;line-height:20px;">Jun 15</div>
<div class="t" style="left:1795.55px;top:571.50px;font-size:12.00px;color:#777;height:20px;line-height:20px;">Jun 22</div>
<div class="t" style="left:1866.99px;top:571.50px;font-size:12.00px;color:#777;height:20px;line-height:20px;">Jun 29</div>
<div class="vl" style="left:722px;top:124.5px;background:#0f6dc0">127.51</div>
<div class="vl" style="left:722px;top:187.5px;background:#0f6dc0">117.93</div>
<div class="vl" style="left:722px;top:250.5px;background:#0f6dc0">108.36</div>
<div class="vl" style="left:722px;top:294.5px;background:#0a2463">101.72</div>
<div class="vl" style="left:722px;top:331px;background:#0f6dc0">96.178</div>
<div class="vl" style="left:722px;top:376.5px;background:#0f6dc0">89.208</div>
<div class="vl" style="left:722px;top:439.5px;background:#0f6dc0">79.633</div>
<div class="vl" style="left:722px;top:502.5px;background:#0f6dc0">70.059</div>
<div class="abs" style="left:652.5px;top:556.5px;width:130.5px;height:17.5px;background:#eaf1f0;border:1px solid #cbd3d6;border-radius:2px"></div>
<div class="t" style="left:654.00px;top:556.00px;font-size:12.00px;color:#2b7a62;height:20px;line-height:20px;letter-spacing:0.820px;">3/6/2020 2:34:17 PM</div>
<div class="t" style="right:18.5px;top:122.7px;height:20px;line-height:20px;font-size:11.8px;letter-spacing:.62px"><span style="color:#2b62a8">Area A_Temperature.sim.ts, </span><span style="color:#0a1a4a">Max Temp during Comp On </span><span style="color:#8a8a8a">(Lane 1)</span></div>
<div id="scr"></div>
<svg style="left:0;top:590px" width="1918" height="90" viewBox="0 590 1918 90"><path d="M505 594.8 V603" stroke="#17785f" stroke-width="2.5"/><path d="M499.8 600.6 H510.2 L505 607.2 Z" fill="#17785f"/><path d="M505 673.2 V665" stroke="#17785f" stroke-width="2.5"/><path d="M499.8 667.2 H510.2 L505 660.6 Z" fill="#17785f"/><path d="M1083 594.5 L1083 607.5 L1076 601 Z" fill="#17785f"/><path d="M1089.5 594.5 L1089.5 607.5 L1082.5 601 Z" fill="#17785f"/><path d="M1112.8 594.5 L1112.8 607.5 L1105.8 601 Z" fill="#17785f"/><path d="M1197.5 594.5 L1197.5 607.5 L1204.5 601 Z" fill="#17785f"/><path d="M1219.3 594.5 L1219.3 607.5 L1226.3 601 Z" fill="#17785f"/><path d="M1225.9 594.5 L1225.9 607.5 L1232.9 601 Z" fill="#17785f"/><path d="M1247.1 594.5 L1247.1 607.5 L1254.1 601 Z" fill="#17785f"/><rect x="1254.4" y="594.5" width="2.2" height="13" fill="#17785f"/><path d="M1282 599.4 A4.2 4.2 0 0 0 1274.2 599.6 M1274 602.8 A4.2 4.2 0 0 0 1281.8 602.6" stroke="#17785f" stroke-width="1.5" fill="none"/><path d="M1279.6 599.8 H1283 V596.4 Z M1276.4 602.2 H1273 V605.6 Z" fill="#17785f"/><rect x="518" y="623" width="1364" height="12.5" rx="2.5" fill="#f6f6f6" stroke="#cbcbcb" stroke-width="2"/><rect x="1062" y="623" width="510" height="12.5" fill="#fff"/><rect x="1061.5" y="624" width="1.8" height="10.5" fill="#cfe6f5"/><rect x="1070.0" y="624" width="5.7" height="10.5" fill="#cfe6f5"/><rect x="1082.5" y="624" width="6.5" height="10.5" fill="#cfe6f5"/><rect x="1095.0" y="624" width="5.5" height="10.5" fill="#cfe6f5"/><rect x="1107.5" y="624" width="8.1" height="10.5" fill="#cfe6f5"/><rect x="1119.9" y="624" width="5.6" height="10.5" fill="#cfe6f5"/><rect x="1132.4" y="624" width="5.6" height="10.5" fill="#cfe6f5"/><rect x="1144.8" y="624" width="5.7" height="10.5" fill="#cfe6f5"/><rect x="1169.6" y="624" width="5.8" height="10.5" fill="#cfe6f5"/><rect x="1185.3" y="624" width="3.6" height="10.5" fill="#cfe6f5"/><rect x="1197.7" y="624" width="3.7" height="10.5" fill="#cfe6f5"/><rect x="1207.1" y="624" width="5.7" height="10.5" fill="#cfe6f5"/><rect x="1219.4" y="624" width="5.9" height="10.5" fill="#cfe6f5"/><rect x="1231.9" y="624" width="5.7" height="10.5" fill="#cfe6f5"/><rect x="1244.4" y="624" width="5.7" height="10.5" fill="#cfe6f5"/><rect x="1256.8" y="624" width="5.7" height="10.5" fill="#cfe6f5"/><rect x="1272.2" y="624" width="3.7" height="10.5" fill="#cfe6f5"/><rect x="1284.7" y="624" width="3.7" height="10.5" fill="#cfe6f5"/><rect x="1294.3" y="624" width="5.7" height="10.5" fill="#cfe6f5"/><rect x="1306.4" y="624" width="6.0" height="10.5" fill="#cfe6f5"/><rect x="1318.8" y="624" width="6.1" height="10.5" fill="#cfe6f5"/><rect x="1331.3" y="624" width="6.1" height="10.5" fill="#cfe6f5"/><rect x="1343.6" y="624" width="6.1" height="10.5" fill="#cfe6f5"/><rect x="1359.8" y="624" width="3.3" height="10.5" fill="#cfe6f5"/><rect x="1372.1" y="624" width="3.5" height="10.5" fill="#cfe6f5"/><rect x="1381.0" y="624" width="6.2" height="10.5" fill="#cfe6f5"/><rect x="1393.5" y="624" width="6.3" height="10.5" fill="#cfe6f5"/><rect x="1406.0" y="624" width="6.1" height="10.5" fill="#cfe6f5"/><rect x="1418.4" y="624" width="6.2" height="10.5" fill="#cfe6f5"/><rect x="1430.8" y="624" width="6.2" height="10.5" fill="#cfe6f5"/><rect x="1447.0" y="624" width="3.5" height="10.5" fill="#cfe6f5"/><rect x="1459.6" y="624" width="3.3" height="10.5" fill="#cfe6f5"/><rect x="1468.2" y="624" width="6.3" height="10.5" fill="#cfe6f5"/><rect x="1480.7" y="624" width="6.1" height="10.5" fill="#cfe6f5"/><rect x="1493.2" y="624" width="6.1" height="10.5" fill="#cfe6f5"/><rect x="1505.7" y="624" width="5.9" height="10.5" fill="#cfe6f5"/><rect x="1518.3" y="624" width="6.0" height="10.5" fill="#cfe6f5"/><rect x="1534.1" y="624" width="3.7" height="10.5" fill="#cfe6f5"/><rect x="1546.6" y="624" width="3.6" height="10.5" fill="#cfe6f5"/><rect x="1555.4" y="624" width="6.1" height="10.5" fill="#cfe6f5"/><rect x="1568.0" y="624" width="4.0" height="10.5" fill="#cfe6f5"/><rect x="1089.5" y="624" width="9.7" height="10.5" fill="#f2c2bd"/><rect x="1157.6" y="624" width="17.5" height="10.5" fill="#bdb0ab"/><rect x="1448.1" y="624" width="10.7" height="10.5" fill="#f2c2bd"/><rect x="1535.9" y="624" width="10.7" height="10.5" fill="#f2c2bd"/><rect x="1010.0" y="624" width="7.0" height="10.5" fill="#d3e6f3"/><rect x="1022.0" y="624" width="7.0" height="10.5" fill="#d3e6f3"/><rect x="1034.0" y="624" width="7.0" height="10.5" fill="#d3e6f3"/><rect x="1046.0" y="624" width="7.0" height="10.5" fill="#d3e6f3"/><rect x="1574.0" y="624" width="6.0" height="10.5" fill="#d3e6f3"/><rect x="1586.0" y="624" width="6.0" height="10.5" fill="#d3e6f3"/><rect x="1598.0" y="624" width="6.0" height="10.5" fill="#d3e6f3"/><rect x="1610.0" y="624" width="6.0" height="10.5" fill="#d3e6f3"/><rect x="1622.0" y="624" width="6.0" height="10.5" fill="#d3e6f3"/><rect x="1634.0" y="624" width="6.0" height="10.5" fill="#d3e6f3"/><rect x="1646.0" y="624" width="6.0" height="10.5" fill="#d3e6f3"/><rect x="1658.0" y="624" width="6.0" height="10.5" fill="#d3e6f3"/><rect x="1670.0" y="624" width="6.0" height="10.5" fill="#d3e6f3"/><rect x="1728.0" y="624" width="6.0" height="10.5" fill="#d3e6f3"/><rect x="1740.0" y="624" width="4.0" height="10.5" fill="#d3e6f3"/><rect x="1682.0" y="624" width="10.0" height="10.5" fill="#f4c9c4"/><rect x="1742.0" y="624" width="3.0" height="10.5" fill="#f4c9c4"/><rect x="1062" y="623" width="510" height="12.5" fill="#fff" fill-opacity=".0" stroke="#17785f" stroke-width="2"/><rect x="1059.2" y="619.5" width="4.6" height="19.5" rx="1.6" fill="#eaf3ef" stroke="#17785f" stroke-width="1.4"/><rect x="1569.7" y="619.5" width="4.6" height="19.5" rx="1.6" fill="#eaf3ef" stroke="#17785f" stroke-width="1.4"/><path d="M548.7 636.5 V640" stroke="#c8c8c8" stroke-width="1"/><path d="M664.5 636.5 V640" stroke="#c8c8c8" stroke-width="1"/><path d="M777.0 636.5 V640" stroke="#c8c8c8" stroke-width="1"/><path d="M892.7 636.5 V640" stroke="#c8c8c8" stroke-width="1"/><path d="M1008.5 636.5 V640" stroke="#c8c8c8" stroke-width="1"/><path d="M1116.0 636.5 V640" stroke="#c8c8c8" stroke-width="1"/><path d="M1231.5 636.5 V640" stroke="#c8c8c8" stroke-width="1"/><path d="M1343.9 636.5 V640" stroke="#c8c8c8" stroke-width="1"/><path d="M1459.7 636.5 V640" stroke="#c8c8c8" stroke-width="1"/><path d="M1571.5 636.5 V640" stroke="#c8c8c8" stroke-width="1"/><path d="M1686.7 636.5 V640" stroke="#c8c8c8" stroke-width="1"/><path d="M1802.4 636.5 V640" stroke="#c8c8c8" stroke-width="1"/><rect x="1887.5" y="620.5" width="19" height="19" fill="#fff"/><rect x="1888" y="621" width="18" height="18" fill="#17785f"/><rect x="1891.2" y="623.4" width="5.3" height="13.2" fill="#fff"/><rect x="1897.5" y="623.4" width="5.3" height="13.2" fill="#fff"/><path d="M1891.2 630.6 L1892.8 626 L1895 634.4 L1897 627.6 L1899 633 L1900.6 626.4 L1902.8 632.6" stroke="#2a8a82" stroke-width="1.1" fill="none" stroke-linejoin="round"/></svg>
<div class="t" style="left:518.50px;top:591.00px;font-size:11.40px;color:#17785f;height:20px;line-height:20px;letter-spacing:-0.308px;">2/16/2020 12:24 AM</div>
<div class="t" style="left:617.50px;top:591.00px;font-size:11.40px;color:#17785f;height:20px;line-height:20px;letter-spacing:-1.433px;text-decoration:underline;">CST</div>
<div class="t" style="left:1127.10px;top:591.00px;font-size:11.40px;color:#17785f;height:20px;line-height:20px;letter-spacing:-0.140px;">4.5 months</div>
<div class="t" style="left:1785.50px;top:591.00px;font-size:11.40px;color:#17785f;height:20px;line-height:20px;letter-spacing:-0.315px;">6/30/2020 10:01 PM</div>
<div class="t" style="left:1886.00px;top:591.00px;font-size:11.40px;color:#17785f;height:20px;line-height:20px;letter-spacing:-1.476px;text-decoration:underline;">CDT</div>
<div class="t" style="left:518.50px;top:658.00px;font-size:11.40px;color:#17785f;height:20px;line-height:20px;letter-spacing:-0.135px;">9/22/2019</div>
<div class="t" style="left:1195.25px;top:658.00px;font-size:11.40px;color:#17785f;height:20px;line-height:20px;letter-spacing:-0.364px;">1 year</div>
<div class="t" style="left:1852.50px;top:658.00px;font-size:11.40px;color:#17785f;height:20px;line-height:20px;letter-spacing:-0.135px;">9/21/2020</div>
<div class="t" style="left:533.33px;top:635.50px;font-size:9.80px;color:#8a8a8a;height:20px;line-height:20px;">Oct '19</div>
<div class="t" style="left:648.04px;top:635.50px;font-size:9.80px;color:#8a8a8a;height:20px;line-height:20px;">Nov '19</div>
<div class="t" style="left:760.54px;top:635.50px;font-size:9.80px;color:#8a8a8a;height:20px;line-height:20px;">Dec '19</div>
<div class="t" style="left:881.80px;top:635.50px;font-size:9.80px;color:#8a8a8a;height:20px;line-height:20px;">2020</div>
<div class="t" style="left:992.31px;top:635.50px;font-size:9.80px;color:#8a8a8a;height:20px;line-height:20px;">Feb '20</div>
<div class="t" style="left:1099.81px;top:635.50px;font-size:9.80px;color:#8a8a8a;height:20px;line-height:20px;">Mar '20</div>
<div class="t" style="left:1216.13px;top:635.50px;font-size:9.80px;color:#8a8a8a;height:20px;line-height:20px;">Apr '20</div>
<div class="t" style="left:1326.90px;top:635.50px;font-size:9.80px;color:#8a8a8a;height:20px;line-height:20px;">May '20</div>
<div class="t" style="left:1444.05px;top:635.50px;font-size:9.80px;color:#8a8a8a;height:20px;line-height:20px;">Jun '20</div>
<div class="t" style="left:1557.49px;top:635.50px;font-size:9.80px;color:#8a8a8a;height:20px;line-height:20px;">Jul '20</div>
<div class="t" style="left:1670.23px;top:635.50px;font-size:9.80px;color:#8a8a8a;height:20px;line-height:20px;">Aug '20</div>
<div class="t" style="left:1785.93px;top:635.50px;font-size:9.80px;color:#8a8a8a;height:20px;line-height:20px;">Sep '20</div>
<div class="abs" style="left:492px;top:705px;width:1102px;height:245px;background:#fff"></div>
<div class="abs" style="left:1594px;top:680px;width:8px;height:270px;background:#f5f5f5;border-left:1px solid #d0d0d0;border-right:1px solid #d0d0d0"></div>
<div class="hd" style="left:492px;width:1102px"></div>
<svg style="left:501px;top:685px" width="16" height="13" viewBox="0 0 16 13"><path d="M1 .6 V12 H15.4" stroke="#fff" stroke-width="1.6" fill="none"/><path d="M2.8 10.6 V6.4 L6 3 L8.6 5.6 L12 2.4 L14.2 6 V10.6 Z" fill="#fff"/></svg>
<div class="t" style="left:520.00px;top:681.80px;font-size:12.40px;color:#fff;height:20px;line-height:20px;letter-spacing:-0.200px;text-shadow:0 0 .5px #fff;">Details</div>
<div class="t" style="left:1397.00px;top:681.80px;font-size:11.80px;color:#fff;height:20px;line-height:20px;letter-spacing:-0.194px;text-shadow:0 0 .4px #fff;">Mar 6, 2020 2:34 PM</div>
<div class="abs" style="left:1513.5px;top:682px;width:75.5px;height:21px;border:1px solid #cfe3db;border-radius:3px"></div>
<svg style="left:1519px;top:685px" width="15" height="14" viewBox="0 0 15 14"><g fill="#fff"><circle cx="5.4" cy="7" r="4.2"/><circle cx="11.6" cy="3.4" r="2.4"/><circle cx="11.6" cy="10.6" r="2.4"/></g><g fill="#17785f"><circle cx="5.4" cy="7" r="1.7"/><circle cx="11.6" cy="3.4" r=".9"/><circle cx="11.6" cy="10.6" r=".9"/></g><g stroke="#fff" stroke-width="1.6"><path d="M5.4 1.8 V12.2 M.2 7 H10.6 M1.8 3.4 L9 10.6 M9 3.4 L1.8 10.6"/></g><circle cx="5.4" cy="7" r="1.7" fill="#17785f"/></svg>
<div class="t" style="left:1535.20px;top:682.20px;font-size:11.20px;color:#fff;height:20px;line-height:20px;letter-spacing:-0.623px;text-shadow:0 0 .4px #fff;">Customize</div>
<div class="abs" style="left:492px;top:731px;width:1102px;height:2px;background:#dcdcdc"></div>
<svg style="left:568px;top:715.8px" width="8.4" height="8.4" viewBox="-4.2 -4.2 8.4 8.4"><path d="M-3.2 -3.2 L3.2 3.2 M3.2 -3.2 L-3.2 3.2" stroke="#444" stroke-width="2.8"/></svg>
<div class="cb" style="left:587.9px;top:713.5px"></div>
<svg style="left:641.9px;top:713.6px" width="9" height="12" viewBox="0 0 9 12"><path d="M.5 5 L4.5 .6 L8.5 5 Z M.5 7 L4.5 11.4 L8.5 7 Z" fill="#444"/></svg>
<div class="t" style="left:657.00px;top:709.60px;font-size:12.00px;color:#222;height:20px;line-height:20px;letter-spacing:0.323px;text-shadow:0 0 .5px #222;">Name</div>
<svg style="left:696.5px;top:713.6px" width="9" height="12" viewBox="0 0 9 12"><path d="M.5 5 L4.5 .6 L8.5 5 Z M.5 7 L4.5 11.4 L8.5 7 Z" fill="#444"/></svg>
<div class="t" style="left:897.00px;top:709.60px;font-size:12.00px;color:#222;height:20px;line-height:20px;letter-spacing:0.305px;text-shadow:0 0 .5px #222;">Color</div>
<svg style="left:933.5px;top:713.6px" width="9" height="12" viewBox="0 0 9 12"><path d="M.5 5 L4.5 .6 L8.5 5 Z M.5 7 L4.5 11.4 L8.5 7 Z" fill="#444"/></svg>
<div class="t" style="left:949.70px;top:709.60px;font-size:12.00px;color:#222;height:20px;line-height:20px;letter-spacing:0.045px;text-shadow:0 0 .5px #222;">Samples</div>
<svg style="left:1004px;top:713.6px" width="9" height="12" viewBox="0 0 9 12"><path d="M.5 5 L4.5 .6 L8.5 5 Z M.5 7 L4.5 11.4 L8.5 7 Z" fill="#444"/></svg>
<div class="t" style="left:1020.00px;top:709.60px;font-size:12.00px;color:#222;height:20px;line-height:20px;letter-spacing:0.253px;text-shadow:0 0 .5px #222;">Line</div>
<svg style="left:1050.9px;top:713.6px" width="9" height="12" viewBox="0 0 9 12"><path d="M.5 5 L4.5 .6 L8.5 5 Z M.5 7 L4.5 11.4 L8.5 7 Z" fill="#444"/></svg>
<div class="t" style="left:1091.20px;top:709.60px;font-size:12.00px;color:#222;height:20px;line-height:20px;letter-spacing:0.385px;text-shadow:0 0 .5px #222;">Width</div>
<svg style="left:1131px;top:713.6px" width="9" height="12" viewBox="0 0 9 12"><path d="M.5 5 L4.5 .6 L8.5 5 Z M.5 7 L4.5 11.4 L8.5 7 Z" fill="#444"/></svg>
<div class="t" style="left:1198.90px;top:709.60px;font-size:12.00px;color:#222;height:20px;line-height:20px;letter-spacing:-0.042px;text-shadow:0 0 .5px #222;">Axis</div>
<svg style="left:1228.3px;top:713.6px" width="9" height="12" viewBox="0 0 9 12"><path d="M.5 5 L4.5 .6 L8.5 5 Z M.5 7 L4.5 11.4 L8.5 7 Z" fill="#444"/></svg>
<div class="t" style="left:1252.00px;top:709.60px;font-size:12.00px;color:#222;height:20px;line-height:20px;letter-spacing:0.223px;text-shadow:0 0 .5px #222;">Align</div>
<svg style="left:1287px;top:713.6px" width="9" height="12" viewBox="0 0 9 12"><path d="M.5 5 L4.5 .6 L8.5 5 Z M.5 7 L4.5 11.4 L8.5 7 Z" fill="#444"/></svg>
<div class="t" style="left:1303.60px;top:709.60px;font-size:12.00px;color:#222;height:20px;line-height:20px;letter-spacing:0.096px;text-shadow:0 0 .5px #222;">Show</div>
<div class="t" style="left:1341.20px;top:709.60px;font-size:12.00px;color:#222;height:20px;line-height:20px;letter-spacing:0.279px;text-shadow:0 0 .5px #222;">Auto</div>
<div class="t" style="left:1374.40px;top:709.60px;font-size:12.00px;color:#222;height:20px;line-height:20px;letter-spacing:-0.092px;text-shadow:0 0 .5px #222;">Axis Min</div>
<svg style="left:1426.3px;top:713.6px" width="9" height="12" viewBox="0 0 9 12"><path d="M.5 5 L4.5 .6 L8.5 5 Z M.5 7 L4.5 11.4 L8.5 7 Z" fill="#444"/></svg>
<div class="t" style="left:1441.20px;top:709.60px;font-size:12.00px;color:#222;height:20px;line-height:20px;letter-spacing:-0.047px;text-shadow:0 0 .5px #222;">Axis Max</div>
<svg style="left:1496.1px;top:713.6px" width="9" height="12" viewBox="0 0 9 12"><path d="M.5 5 L4.5 .6 L8.5 5 Z M.5 7 L4.5 11.4 L8.5 7 Z" fill="#444"/></svg>
<div class="t" style="left:1146.60px;top:709.60px;font-size:12.00px;color:#17785f;height:20px;line-height:20px;letter-spacing:-0.074px;text-shadow:0 0 .4px #17785f;">Lane</div>
<svg style="left:1180.3px;top:713.5px" width="9" height="6" viewBox="0 0 9 6"><path d="M.5 5.4 L4.5 .8 L8.5 5.4 Z" fill="#17785f"/></svg>
<svg style="left:1570.3px;top:710.1px" width="15" height="13" viewBox="0 0 15 13"><path d="M.6 1 H10.6 V8 H.6 Z M.6 3.4 H10.6 M.6 5.8 H10.6 M4 1 V8 M7.4 1 V8" stroke="#333" stroke-width="1" fill="none"/><circle cx="10.6" cy="8.6" r="3.8" fill="#222"/><path d="M8.6 8.6 H12.6 M10.6 6.6 V10.6" stroke="#fff" stroke-width="1.2"/></svg>
<div class="row" style="top:733px;height:28px;background:#f5f5f5"></div>
<div class="row" style="top:761px;height:28px;background:#fff"></div>
<div class="row" style="top:789px;height:23px;background:#f5f5f5"></div>
<div class="row" style="top:812px;height:23px;background:#fff"></div>
<div class="row" style="top:835px;height:23px;background:#f5f5f5"></div>
<svg style="left:521px;top:737.8px" width="14" height="14" viewBox="0 0 14 14"><path d="M12.8 1.2 C9.4 1.4 6.8 3 5.2 5.6 L2.6 6 L.8 8.2 L3.6 8.4 L5.6 10.4 L5.8 13.2 L8 11.4 L8.4 8.8 C11 7.2 12.6 4.6 12.8 1.2 Z" fill="#17785f"/><path d="M3.4 10.6 L1.4 12.6" stroke="#17785f" stroke-width="1.4"/></svg>
<svg style="left:546px;top:737.3px" width="12" height="12" viewBox="0 0 12 12"><circle cx="6" cy="6" r="5.6" fill="#17785f"/><rect x="5.1" y="5.4" width="1.9" height="4" fill="#fff"/><rect x="4.3" y="5.4" width="1.6" height="1" fill="#fff"/><rect x="4.2" y="8.8" width="3.7" height="1" fill="#fff"/><circle cx="6.05" cy="3.4" r="1.05" fill="#fff"/></svg>
<svg style="left:568px;top:740.1px" width="8.4" height="8.4" viewBox="-4.2 -4.2 8.4 8.4"><path d="M-3.2 -3.2 L3.2 3.2 M3.2 -3.2 L-3.2 3.2" stroke="#17785f" stroke-width="2.8"/></svg>
<div class="cb" style="left:587.9px;top:737.8px"></div>
<svg style="left:615.5px;top:735.8px" width="16" height="13" viewBox="0 0 16 13"><path d="M0.8 7.6 L3.4 1.2 L6.2 9.8 L8.6 4.6 L11.2 12 L14 8 L15 9.4" stroke="#1a74c6" stroke-width="1.45" fill="none" stroke-linejoin="round"/></svg>
<div class="t" style="left:657.00px;top:733.80px;font-size:12.00px;color:#222;height:20px;line-height:20px;letter-spacing:0.243px;text-shadow:0 0 .45px #222;">Area A_Temperature.sim.ts</div>
<div class="sw" style="top:738px;background:#106bc1"></div>
<div class="sel" style="left:949px;top:735.2px;width:65px;height:22.5px"></div>
<div class="abs" style="left:974px;top:745.4px;width:14px;height:1.4px;background:#222"></div>
<svg style="left:999px;top:743.3px" width="8" height="5" viewBox="0 0 8 5"><path d="M.4 4.6 L4 .6 L7.6 4.6 Z" fill="#222"/></svg>
<div class="sel" style="left:1020px;top:735.2px;width:65px;height:22.5px"></div>
<div class="abs" style="left:1045px;top:745.4px;width:14px;height:1.4px;background:#222"></div>
<svg style="left:1070px;top:743.3px" width="8" height="5" viewBox="0 0 8 5"><path d="M.4 4.6 L4 .6 L7.6 4.6 Z" fill="#222"/></svg>
<div class="sel" style="left:1091px;top:735.4px;width:47px;height:19.6px"></div>
<div class="t" style="left:1101.00px;top:738.00px;font-size:10.00px;color:#444;height:20px;line-height:20px;">1</div>
<svg style="left:1123px;top:741.9px" width="10" height="7" viewBox="0 0 10 7"><path d="M1.2 1.2 L5 5 L8.8 1.2" stroke="#333" stroke-width="1.8" fill="none"/></svg>
<div class="sel" style="left:1146px;top:735.4px;width:47px;height:19.6px"></div>
<div class="t" style="left:1156.00px;top:738.00px;font-size:10.00px;color:#444;height:20px;line-height:20px;">1</div>
<svg style="left:1178px;top:741.9px" width="10" height="7" viewBox="0 0 10 7"><path d="M1.2 1.2 L5 5 L8.8 1.2" stroke="#333" stroke-width="1.8" fill="none"/></svg>
<div class="sel" style="left:1199px;top:735.4px;width:47px;height:19.6px"></div>
<div class="t" style="left:1209.00px;top:738.00px;font-size:10.00px;color:#444;height:20px;line-height:20px;">A</div>
<svg style="left:1231px;top:741.9px" width="10" height="7" viewBox="0 0 10 7"><path d="M1.2 1.2 L5 5 L8.8 1.2" stroke="#333" stroke-width="1.8" fill="none"/></svg>
<div class="sel" style="left:1252px;top:735.4px;width:45px;height:19.6px"></div>
<div class="t" style="left:1262.00px;top:738.00px;font-size:10.00px;color:#444;height:20px;line-height:20px;">L</div>
<svg style="left:1284px;top:741.9px" width="10" height="7" viewBox="0 0 10 7"><path d="M1.2 1.2 L5 5 L8.8 1.2" stroke="#333" stroke-width="1.8" fill="none"/></svg>
<div class="cbk" style="left:1313px;top:739.6px"></div><svg style="left:1313px;top:739.6px" width="12" height="12" viewBox="0 0 12 12"><path d="M2.6 6.2 L5 8.6 L9.6 3.4" stroke="#fff" stroke-width="1.8" fill="none"/></svg>
<div class="cbk" style="left:1348.2px;top:739.6px"></div><svg style="left:1348.2px;top:739.6px" width="12" height="12" viewBox="0 0 12 12"><path d="M2.6 6.2 L5 8.6 L9.6 3.4" stroke="#fff" stroke-width="1.8" fill="none"/></svg>
<div class="ro" style="left:1374px;top:734.8px;width:60px"></div>
<div class="ro" style="left:1441px;top:734.8px;width:60px"></div>
<div class="abs" style="left:1381px;top:734.8px;width:50.5px;height:20px;overflow:hidden"><div class="t" style="left:0.00px;top:0.50px;font-size:11.40px;color:#555;height:20px;line-height:20px;letter-spacing:0.124px;">64.604208</div></div>
<div class="abs" style="left:1448px;top:734.8px;width:50.5px;height:20px;overflow:hidden"><div class="t" style="left:0.00px;top:0.50px;font-size:11.40px;color:#555;height:20px;line-height:20px;letter-spacing:0.124px;">127.50767</div></div>
<svg style="left:495px;top:763.7px" width="14" height="13" viewBox="0 0 14 13"><path d="M9.6 7.6 V10.4 Q9.6 11.6 8.4 11.6 H2.4 Q1.2 11.6 1.2 10.4 V4.4 Q1.2 3.2 2.4 3.2 H7" stroke="#17785f" stroke-width="1.1" fill="none"/><path d="M5 7 L11 1 L13 3 L7 9 L4.6 9.4 Z" fill="none" stroke="#17785f" stroke-width="1"/></svg>
<svg style="left:521px;top:765.7px" width="14" height="14" viewBox="0 0 14 14"><path d="M12.8 1.2 C9.4 1.4 6.8 3 5.2 5.6 L2.6 6 L.8 8.2 L3.6 8.4 L5.6 10.4 L5.8 13.2 L8 11.4 L8.4 8.8 C11 7.2 12.6 4.6 12.8 1.2 Z" fill="#17785f"/><path d="M3.4 10.6 L1.4 12.6" stroke="#17785f" stroke-width="1.4"/></svg>
<svg style="left:546px;top:765.2px" width="12" height="12" viewBox="0 0 12 12"><circle cx="6" cy="6" r="5.6" fill="#17785f"/><rect x="5.1" y="5.4" width="1.9" height="4" fill="#fff"/><rect x="4.3" y="5.4" width="1.6" height="1" fill="#fff"/><rect x="4.2" y="8.8" width="3.7" height="1" fill="#fff"/><circle cx="6.05" cy="3.4" r="1.05" fill="#fff"/></svg>
<svg style="left:568px;top:768px" width="8.4" height="8.4" viewBox="-4.2 -4.2 8.4 8.4"><path d="M-3.2 -3.2 L3.2 3.2 M3.2 -3.2 L-3.2 3.2" stroke="#17785f" stroke-width="2.8"/></svg>
<div class="cb" style="left:587.9px;top:765.7px"></div>
<svg style="left:615.5px;top:763.7px" width="16" height="13" viewBox="0 0 16 13"><path d="M0.8 7.6 L3.4 1.2 L6.2 9.8 L8.6 4.6 L11.2 12 L14 8 L15 9.4" stroke="#0a2463" stroke-width="1.45" fill="none" stroke-linejoin="round"/></svg>
<div class="t" style="left:657.00px;top:761.70px;font-size:12.00px;color:#222;height:20px;line-height:20px;letter-spacing:0.152px;text-shadow:0 0 .45px #222;">Max Temp during Comp On</div>
<div class="sw" style="top:766px;background:#0a2463"></div>
<div class="sel" style="left:949px;top:763.1px;width:65px;height:22.5px"></div>
<div class="abs" style="left:974px;top:773.3px;width:14px;height:1.4px;background:#222"></div>
<svg style="left:999px;top:771.2px" width="8" height="5" viewBox="0 0 8 5"><path d="M.4 4.6 L4 .6 L7.6 4.6 Z" fill="#222"/></svg>
<div class="sel" style="left:1020px;top:763.1px;width:65px;height:22.5px"></div>
<div class="abs" style="left:1045px;top:773.3px;width:14px;height:1.4px;background:#222"></div>
<svg style="left:1070px;top:771.2px" width="8" height="5" viewBox="0 0 8 5"><path d="M.4 4.6 L4 .6 L7.6 4.6 Z" fill="#222"/></svg>
<div class="sel" style="left:1091px;top:763.3px;width:47px;height:19.6px"></div>
<div class="t" style="left:1101.00px;top:765.90px;font-size:10.00px;color:#444;height:20px;line-height:20px;">1</div>
<svg style="left:1123px;top:769.8px" width="10" height="7" viewBox="0 0 10 7"><path d="M1.2 1.2 L5 5 L8.8 1.2" stroke="#333" stroke-width="1.8" fill="none"/></svg>
<div class="sel" style="left:1146px;top:763.3px;width:47px;height:19.6px"></div>
<div class="t" style="left:1156.00px;top:765.90px;font-size:10.00px;color:#444;height:20px;line-height:20px;">1</div>
<svg style="left:1178px;top:769.8px" width="10" height="7" viewBox="0 0 10 7"><path d="M1.2 1.2 L5 5 L8.8 1.2" stroke="#333" stroke-width="1.8" fill="none"/></svg>
<div class="sel" style="left:1199px;top:763.3px;width:47px;height:19.6px"></div>
<div class="t" style="left:1209.00px;top:765.90px;font-size:10.00px;color:#444;height:20px;line-height:20px;">A</div>
<svg style="left:1231px;top:769.8px" width="10" height="7" viewBox="0 0 10 7"><path d="M1.2 1.2 L5 5 L8.8 1.2" stroke="#333" stroke-width="1.8" fill="none"/></svg>
<div class="sel" style="left:1252px;top:763.3px;width:45px;height:19.6px"></div>
<div class="t" style="left:1262.00px;top:765.90px;font-size:10.00px;color:#444;height:20px;line-height:20px;">L</div>
<svg style="left:1284px;top:769.8px" width="10" height="7" viewBox="0 0 10 7"><path d="M1.2 1.2 L5 5 L8.8 1.2" stroke="#333" stroke-width="1.8" fill="none"/></svg>
<div class="cbk" style="left:1313px;top:767.5px"></div><svg style="left:1313px;top:767.5px" width="12" height="12" viewBox="0 0 12 12"><path d="M2.6 6.2 L5 8.6 L9.6 3.4" stroke="#fff" stroke-width="1.8" fill="none"/></svg>
<div class="cbk" style="left:1348.2px;top:767.5px"></div><svg style="left:1348.2px;top:767.5px" width="12" height="12" viewBox="0 0 12 12"><path d="M2.6 6.2 L5 8.6 L9.6 3.4" stroke="#fff" stroke-width="1.8" fill="none"/></svg>
<div class="ro" style="left:1374px;top:762.7px;width:60px"></div>
<div class="ro" style="left:1441px;top:762.7px;width:60px"></div>
<div class="abs" style="left:1381px;top:762.7px;width:50.5px;height:20px;overflow:hidden"><div class="t" style="left:0.00px;top:0.50px;font-size:11.40px;color:#555;height:20px;line-height:20px;letter-spacing:0.124px;">64.604208</div></div>
<div class="abs" style="left:1448px;top:762.7px;width:50.5px;height:20px;overflow:hidden"><div class="t" style="left:0.00px;top:0.50px;font-size:11.40px;color:#555;height:20px;line-height:20px;letter-spacing:0.124px;">127.50767</div></div>
<svg style="left:495px;top:792px" width="14" height="13" viewBox="0 0 14 13"><path d="M9.6 7.6 V10.4 Q9.6 11.6 8.4 11.6 H2.4 Q1.2 11.6 1.2 10.4 V4.4 Q1.2 3.2 2.4 3.2 H7" stroke="#17785f" stroke-width="1.1" fill="none"/><path d="M5 7 L11 1 L13 3 L7 9 L4.6 9.4 Z" fill="none" stroke="#17785f" stroke-width="1"/></svg>
<svg style="left:521px;top:794px" width="14" height="14" viewBox="0 0 14 14"><path d="M12.8 1.2 C9.4 1.4 6.8 3 5.2 5.6 L2.6 6 L.8 8.2 L3.6 8.4 L5.6 10.4 L5.8 13.2 L8 11.4 L8.4 8.8 C11 7.2 12.6 4.6 12.8 1.2 Z" fill="#17785f"/><path d="M3.4 10.6 L1.4 12.6" stroke="#17785f" stroke-width="1.4"/></svg>
<svg style="left:546px;top:793.5px" width="12" height="12" viewBox="0 0 12 12"><circle cx="6" cy="6" r="5.6" fill="#17785f"/><rect x="5.1" y="5.4" width="1.9" height="4" fill="#fff"/><rect x="4.3" y="5.4" width="1.6" height="1" fill="#fff"/><rect x="4.2" y="8.8" width="3.7" height="1" fill="#fff"/><circle cx="6.05" cy="3.4" r="1.05" fill="#fff"/></svg>
<svg style="left:568px;top:796.3px" width="8.4" height="8.4" viewBox="-4.2 -4.2 8.4 8.4"><path d="M-3.2 -3.2 L3.2 3.2 M3.2 -3.2 L-3.2 3.2" stroke="#17785f" stroke-width="2.8"/></svg>
<div class="cb" style="left:587.9px;top:794px"></div>
<svg style="left:617.4px;top:790.8px" width="11.6" height="14" viewBox="0 0 11.6 14"><rect x="0" y="0" width="5.4" height="14" rx="1" fill="#1f9fdb"/><rect x="6.2" y="0" width="5.4" height="14" rx="1" fill="#1f9fdb"/><path d="M0 7 L1.7 3 L3.9 11.2 L5.9 4.4 L8 11 L9.9 4.6 L11.6 8.6" stroke="#fff" stroke-width="1.15" fill="none" stroke-linejoin="round" opacity=".95"/></svg>
<div class="t" style="left:657.00px;top:790.00px;font-size:12.00px;color:#222;height:20px;line-height:20px;letter-spacing:0.062px;text-shadow:0 0 .45px #222;">Compressor On</div>
<div class="sw" style="top:794px;background:#1f9fdb"></div>
<svg style="left:495px;top:815px" width="14" height="13" viewBox="0 0 14 13"><path d="M9.6 7.6 V10.4 Q9.6 11.6 8.4 11.6 H2.4 Q1.2 11.6 1.2 10.4 V4.4 Q1.2 3.2 2.4 3.2 H7" stroke="#17785f" stroke-width="1.1" fill="none"/><path d="M5 7 L11 1 L13 3 L7 9 L4.6 9.4 Z" fill="none" stroke="#17785f" stroke-width="1"/></svg>
<svg style="left:522px;top:817px" width="12" height="12" viewBox="0 0 12 12"><circle cx="6" cy="6" r="5.6" fill="#f0a52c"/><rect x="5.1" y="2.6" width="1.9" height="4.6" fill="#fff"/><circle cx="6.05" cy="9" r="1.1" fill="#fff"/></svg>
<svg style="left:546px;top:816.5px" width="12" height="12" viewBox="0 0 12 12"><circle cx="6" cy="6" r="5.6" fill="#17785f"/><rect x="5.1" y="5.4" width="1.9" height="4" fill="#fff"/><rect x="4.3" y="5.4" width="1.6" height="1" fill="#fff"/><rect x="4.2" y="8.8" width="3.7" height="1" fill="#fff"/><circle cx="6.05" cy="3.4" r="1.05" fill="#fff"/></svg>
<svg style="left:568px;top:819.3px" width="8.4" height="8.4" viewBox="-4.2 -4.2 8.4 8.4"><path d="M-3.2 -3.2 L3.2 3.2 M3.2 -3.2 L-3.2 3.2" stroke="#17785f" stroke-width="2.8"/></svg>
<div class="cb" style="left:587.9px;top:817px"></div>
<svg style="left:617.4px;top:813.8px" width="11.6" height="14" viewBox="0 0 11.6 14"><rect x="0" y="0" width="5.4" height="14" rx="1" fill="#f91800"/><rect x="6.2" y="0" width="5.4" height="14" rx="1" fill="#f91800"/><path d="M0 7 L1.7 3 L3.9 11.2 L5.9 4.4 L8 11 L9.9 4.6 L11.6 8.6" stroke="#fff" stroke-width="1.15" fill="none" stroke-linejoin="round" opacity=".95"/></svg>
<div class="t" style="left:657.00px;top:813.00px;font-size:12.00px;color:#222;height:20px;line-height:20px;letter-spacing:0.402px;text-shadow:0 0 .45px #222;">Anomaly</div>
<div class="sw" style="top:817px;background:#f91800"></div>
<svg style="left:521px;top:840px" width="14" height="14" viewBox="0 0 14 14"><path d="M12.8 1.2 C9.4 1.4 6.8 3 5.2 5.6 L2.6 6 L.8 8.2 L3.6 8.4 L5.6 10.4 L5.8 13.2 L8 11.4 L8.4 8.8 C11 7.2 12.6 4.6 12.8 1.2 Z" fill="#17785f"/><path d="M3.4 10.6 L1.4 12.6" stroke="#17785f" stroke-width="1.4"/></svg>
<svg style="left:546px;top:839.5px" width="12" height="12" viewBox="0 0 12 12"><circle cx="6" cy="6" r="5.6" fill="#17785f"/><rect x="5.1" y="5.4" width="1.9" height="4" fill="#fff"/><rect x="4.3" y="5.4" width="1.6" height="1" fill="#fff"/><rect x="4.2" y="8.8" width="3.7" height="1" fill="#fff"/><circle cx="6.05" cy="3.4" r="1.05" fill="#fff"/></svg>
<svg style="left:568px;top:842.3px" width="8.4" height="8.4" viewBox="-4.2 -4.2 8.4 8.4"><path d="M-3.2 -3.2 L3.2 3.2 M3.2 -3.2 L-3.2 3.2" stroke="#17785f" stroke-width="2.8"/></svg>
<div class="cb" style="left:587.9px;top:840px"></div>
<svg style="left:617.4px;top:836.8px" width="11.6" height="14" viewBox="0 0 11.6 14"><rect x="0" y="0" width="5.4" height="14" rx="1" fill="#1f8c4d"/><rect x="6.2" y="0" width="5.4" height="14" rx="1" fill="#1f8c4d"/><path d="M0 7 L1.7 3 L3.9 11.2 L5.9 4.4 L8 11 L9.9 4.6 L11.6 8.6" stroke="#fff" stroke-width="1.15" fill="none" stroke-linejoin="round" opacity=".95"/></svg>
<div class="t" style="left:657.00px;top:836.00px;font-size:12.00px;color:#222;height:20px;line-height:20px;letter-spacing:0.202px;text-shadow:0 0 .45px #222;">Annotation Capsules 1</div>
<div class="sw" style="top:840px;background:#1f8c4d"></div>
<svg style="left:819px;top:736px" width="16" height="13" viewBox="0 0 16 13"><path d="M1 7 L4.6 3 L7.4 6 L10.6 1.6 L15 6.4" stroke="#17785f" stroke-width="2" fill="none"/><path d="M1 11.6 L4.6 7.6 L7.4 10.6 L10.6 6.2 L15 11" stroke="#17785f" stroke-width="2" fill="none"/></svg>
<svg style="left:789px;top:838px" width="15" height="12" viewBox="0 0 15 12"><path d="M7.8 1 C11.4 1 14.2 2.5 14.2 4.6 C14.2 6.7 11.4 8.2 7.8 8.2 C6.9 8.2 6 8.1 5.2 7.9 C4.2 9 2.8 9.8 1.4 9.9 C2.2 9.2 2.6 8.3 2.6 7.4 C1.8 6.6 1.4 5.6 1.4 4.6 C1.4 2.5 4.2 1 7.8 1 Z" fill="none" stroke="#17785f" stroke-width="1"/><path d="M5.4 4.6 h.01 M7.8 4.6 h.01 M10.2 4.6 h.01" stroke="#17785f" stroke-width="1.1" stroke-linecap="round"/></svg>
<svg style="left:568px;top:864.8px" width="8.4" height="8.4" viewBox="-4.2 -4.2 8.4 8.4"><path d="M-3.2 -3.2 L3.2 3.2 M3.2 -3.2 L-3.2 3.2" stroke="#17785f" stroke-width="2.8"/></svg>
<svg style="left:588px;top:863px" width="14" height="14" viewBox="0 0 14 14"><circle cx="5.8" cy="5.8" r="4.2" fill="none" stroke="#17785f" stroke-width="1.5"/><path d="M9 9 L12.8 12.8" stroke="#17785f" stroke-width="2"/><path d="M3.6 5.8 h4.4 M5.8 3.6 v4.4" stroke="#17785f" stroke-width="1.1"/></svg>
<svg style="left:615px;top:862px" width="14" height="14" viewBox="0 0 14 14"><path d="M3.4 .6 V10.4 H13.4 M.6 3.4 H10.4 V13.4" stroke="#222" stroke-width="1.7" fill="none"/><path d="M4.6 9.2 L9.4 4.4" stroke="#222" stroke-width="1"/></svg>
<div class="t" style="left:657.00px;top:859.00px;font-size:11.60px;color:#333;height:20px;line-height:20px;letter-spacing:-0.075px;font-style:italic;">Selected Region</div>
<div class="t" style="left:751.50px;top:859.00px;font-size:11.60px;color:#333;height:20px;line-height:20px;letter-spacing:-0.180px;font-style:italic;">3/12/2020 2:58:24 PM - 3/17/2020 7:48:50 AM (4d 16:50:26.739)</div>
<div class="abs" style="left:1596px;top:809px;width:1px;height:8px;background:#8a8a8a"></div><div class="abs" style="left:1598px;top:809px;width:1px;height:8px;background:#8a8a8a"></div><div class="abs" style="left:1600px;top:809px;width:1px;height:8px;background:#8a8a8a"></div>
<div class="abs" style="left:1602px;top:705px;width:316px;height:245px;background:#fff"></div>
<div class="hd" style="left:1602px;width:316px"></div>
<svg style="left:1614.2px;top:683.9px" width="9.8" height="13.2" viewBox="0 0 9.5 13.4"><path d="M3 .7 H.8 V12.7 H3 M6.5 .7 H8.7 V12.7 H6.5" stroke="#fff" stroke-width="1.3" fill="none"/><path d="M2.5 7.4 L4.1 2.9 L5.6 10.8 L7.2 5.8" stroke="#fff" stroke-width="1.2" fill="none" stroke-linejoin="round"/></svg>
<div class="t" style="left:1629.00px;top:681.80px;font-size:12.40px;color:#fff;height:20px;line-height:20px;letter-spacing:-0.387px;text-shadow:0 0 .5px #fff;">Capsules</div>
<div class="abs" style="left:1871px;top:682px;width:44px;height:20.5px;background:#fff;border-radius:3px"></div>
<div class="abs" style="left:1893px;top:682px;width:1px;height:20.5px;background:#ccc"></div>
<svg style="left:1877px;top:686px" width="13" height="13" viewBox="0 0 13 13"><circle cx="5.2" cy="5.2" r="3.8" fill="none" stroke="#222" stroke-width="1.4"/><path d="M8 8 L11.6 11.6" stroke="#222" stroke-width="1.9"/><path d="M3.4 5.2 h3.6 M5.2 3.4 v3.6" stroke="#222" stroke-width="1"/></svg>
<svg style="left:1899px;top:687px" width="11" height="11" viewBox="0 0 11 11"><rect x=".8" y=".8" width="9.4" height="9.4" rx="1.6" fill="none" stroke="#555" stroke-width="1"/><path d="M3 5.5 H8" stroke="#555" stroke-width="1"/></svg>
<div class="abs" style="left:1603px;top:735px;width:309px;height:2px;background:#dcdcdc"></div>
<div class="cb" style="left:1607.8px;top:717.5px"></div>
<div class="t" style="left:1652.00px;top:714.00px;font-size:12.00px;color:#17785f;height:20px;line-height:20px;letter-spacing:0.452px;text-shadow:0 0 .4px #17785f;">Start</div>
<svg style="left:1686.9px;top:717px" width="9" height="6" viewBox="0 0 9 6"><path d="M.5 5.4 L4.5 .8 L8.5 5.4 Z" fill="#17785f"/></svg>
<div class="t" style="left:1798.40px;top:714.00px;font-size:12.00px;color:#222;height:20px;line-height:20px;letter-spacing:0.405px;text-shadow:0 0 .4px #222;">Duration</div>
<svg style="left:1854.3px;top:717.4px" width="9" height="12" viewBox="0 0 9 12"><path d="M.5 5 L4.5 .6 L8.5 5 Z M.5 7 L4.5 11.4 L8.5 7 Z" fill="#444"/></svg>
<svg style="left:1893.5px;top:712.5px" width="15" height="13" viewBox="0 0 15 13"><path d="M.6 1 H10.6 V8 H.6 Z M.6 3.4 H10.6 M.6 5.8 H10.6 M4 1 V8 M7.4 1 V8" stroke="#333" stroke-width="1" fill="none"/><circle cx="10.6" cy="8.6" r="3.8" fill="#222"/><path d="M8.6 8.6 H12.6 M10.6 6.6 V10.6" stroke="#fff" stroke-width="1.2"/></svg>
<div class="abs" style="left:1603px;top:737px;width:309px;height:23px;background:#f5f5f5;border-bottom:1px solid #dde1e6"></div>
<svg style="left:1608px;top:742px" width="11" height="11" viewBox="0 0 11 11"><circle cx="5.5" cy="5.5" r="4.7" fill="none" stroke="#c2c2c2" stroke-width="1.5"/><path d="M2.4 8.6 L8.6 2.4" stroke="#c2c2c2" stroke-width="1.5"/></svg>
<svg style="left:1633.45px;top:739px" width="9.5" height="13.4" viewBox="0 0 9.5 13.4"><path d="M3 .7 H.8 V12.7 H3 M6.5 .7 H8.7 V12.7 H6.5" stroke="#1ba1e2" stroke-width="1.3" fill="none"/><path d="M2.5 7.4 L4.1 2.9 L5.6 10.8 L7.2 5.8" stroke="#1ba1e2" stroke-width="1.1" fill="none" stroke-linejoin="round"/></svg>
<div class="t" style="left:1652.00px;top:737.90px;font-size:11.60px;color:#222;height:20px;line-height:20px;letter-spacing:-0.125px;">Starts off-screen</div>
<div class="abs" style="left:1603px;top:760px;width:309px;height:23px;background:#fff;border-bottom:1px solid #dde1e6"></div>
<div class="cb" style="left:1607.8px;top:764.5px"></div>
<svg style="left:1633.45px;top:762px" width="9.5" height="13.4" viewBox="0 0 9.5 13.4"><path d="M3 .7 H.8 V12.7 H3 M6.5 .7 H8.7 V12.7 H6.5" stroke="#1ba1e2" stroke-width="1.3" fill="none"/><path d="M2.5 7.4 L4.1 2.9 L5.6 10.8 L7.2 5.8" stroke="#1ba1e2" stroke-width="1.1" fill="none" stroke-linejoin="round"/></svg>
<div class="t" style="left:1652.00px;top:760.90px;font-size:11.60px;color:#222;height:20px;line-height:20px;letter-spacing:-0.143px;">Feb 18, 2020 6:52 AM</div>
<div class="t" style="left:1798.40px;top:760.90px;font-size:11.60px;color:#222;height:20px;line-height:20px;letter-spacing:-0.028px;">1d 12:17:30.592</div>
<div class="abs" style="left:1603px;top:783px;width:309px;height:23px;background:#f5f5f5;border-bottom:1px solid #dde1e6"></div>
<div class="cb" style="left:1607.8px;top:787.5px"></div>
<svg style="left:1633.45px;top:785px" width="9.5" height="13.4" viewBox="0 0 9.5 13.4"><path d="M3 .7 H.8 V12.7 H3 M6.5 .7 H8.7 V12.7 H6.5" stroke="#1ba1e2" stroke-width="1.3" fill="none"/><path d="M2.5 7.4 L4.1 2.9 L5.6 10.8 L7.2 5.8" stroke="#1ba1e2" stroke-width="1.1" fill="none" stroke-linejoin="round"/></svg>
<div class="t" style="left:1652.00px;top:783.90px;font-size:11.60px;color:#222;height:20px;line-height:20px;letter-spacing:-0.143px;">Feb 21, 2020 2:39 PM</div>
<div class="t" style="left:1798.40px;top:783.90px;font-size:11.60px;color:#222;height:20px;line-height:20px;letter-spacing:-0.028px;">1d 18:17:26.383</div>
<div class="abs" style="left:1603px;top:806px;width:309px;height:23px;background:#fff;border-bottom:1px solid #dde1e6"></div>
<div class="cb" style="left:1607.8px;top:810.5px"></div>
<svg style="left:1633.45px;top:808px" width="9.5" height="13.4" viewBox="0 0 9.5 13.4"><path d="M3 .7 H.8 V12.7 H3 M6.5 .7 H8.7 V12.7 H6.5" stroke="#1ba1e2" stroke-width="1.3" fill="none"/><path d="M2.5 7.4 L4.1 2.9 L5.6 10.8 L7.2 5.8" stroke="#1ba1e2" stroke-width="1.1" fill="none" stroke-linejoin="round"/></svg>
<div class="t" style="left:1652.00px;top:806.90px;font-size:11.60px;color:#222;height:20px;line-height:20px;letter-spacing:-0.144px;">Feb 23, 2020 10:57 AM</div>
<div class="t" style="left:1798.40px;top:806.90px;font-size:11.60px;color:#222;height:20px;line-height:20px;letter-spacing:-0.028px;">05:02:25.145</div>
<div class="abs" style="left:1603px;top:829px;width:309px;height:23px;background:#f5f5f5;border-bottom:1px solid #dde1e6"></div>
<div class="cb" style="left:1607.8px;top:833.5px"></div>
<svg style="left:1633.45px;top:831px" width="9.5" height="13.4" viewBox="0 0 9.5 13.4"><path d="M3 .7 H.8 V12.7 H3 M6.5 .7 H8.7 V12.7 H6.5" stroke="#f4361e" stroke-width="1.3" fill="none"/><path d="M2.5 7.4 L4.1 2.9 L5.6 10.8 L7.2 5.8" stroke="#f4361e" stroke-width="1.1" fill="none" stroke-linejoin="round"/></svg>
<div class="t" style="left:1652.00px;top:829.90px;font-size:11.60px;color:#222;height:20px;line-height:20px;letter-spacing:-0.144px;">Feb 23, 2020 10:57 AM</div>
<div class="t" style="left:1798.40px;top:829.90px;font-size:11.60px;color:#222;height:20px;line-height:20px;letter-spacing:-0.028px;">2d 14:34:09.917</div>
<div class="abs" style="left:1603px;top:852px;width:309px;height:23px;background:#fff;border-bottom:1px solid #dde1e6"></div>
<div class="cb" style="left:1607.8px;top:856.5px"></div>
<svg style="left:1633.45px;top:854px" width="9.5" height="13.4" viewBox="0 0 9.5 13.4"><path d="M3 .7 H.8 V12.7 H3 M6.5 .7 H8.7 V12.7 H6.5" stroke="#1ba1e2" stroke-width="1.3" fill="none"/><path d="M2.5 7.4 L4.1 2.9 L5.6 10.8 L7.2 5.8" stroke="#1ba1e2" stroke-width="1.1" fill="none" stroke-linejoin="round"/></svg>
<div class="t" style="left:1652.00px;top:852.90px;font-size:11.60px;color:#222;height:20px;line-height:20px;letter-spacing:-0.144px;">Feb 24, 2020 10:07 PM</div>
<div class="t" style="left:1798.40px;top:852.90px;font-size:11.60px;color:#222;height:20px;line-height:20px;letter-spacing:-0.028px;">1d 12:12:20.980</div>
<div class="abs" style="left:1603px;top:875px;width:309px;height:23px;background:#f5f5f5;border-bottom:1px solid #dde1e6"></div>
<div class="cb" style="left:1607.8px;top:879.5px"></div>
<svg style="left:1633.45px;top:877px" width="9.5" height="13.4" viewBox="0 0 9.5 13.4"><path d="M3 .7 H.8 V12.7 H3 M6.5 .7 H8.7 V12.7 H6.5" stroke="#1ba1e2" stroke-width="1.3" fill="none"/><path d="M2.5 7.4 L4.1 2.9 L5.6 10.8 L7.2 5.8" stroke="#1ba1e2" stroke-width="1.1" fill="none" stroke-linejoin="round"/></svg>
<div class="t" style="left:1652.00px;top:875.90px;font-size:11.60px;color:#222;height:20px;line-height:20px;letter-spacing:-0.143px;">Feb 28, 2020 5:50 AM</div>
<div class="t" style="left:1798.40px;top:875.90px;font-size:11.60px;color:#222;height:20px;line-height:20px;letter-spacing:-0.028px;">2d 04:40:26.950</div>
<div class="abs" style="left:1603px;top:898px;width:309px;height:23px;background:#fff;border-bottom:1px solid #dde1e6"></div>
<div class="cb" style="left:1607.8px;top:902.5px"></div>
<svg style="left:1633.45px;top:900px" width="9.5" height="13.4" viewBox="0 0 9.5 13.4"><path d="M3 .7 H.8 V12.7 H3 M6.5 .7 H8.7 V12.7 H6.5" stroke="#1ba1e2" stroke-width="1.3" fill="none"/><path d="M2.5 7.4 L4.1 2.9 L5.6 10.8 L7.2 5.8" stroke="#1ba1e2" stroke-width="1.1" fill="none" stroke-linejoin="round"/></svg>
<div class="t" style="left:1652.00px;top:898.90px;font-size:11.60px;color:#222;height:20px;line-height:20px;letter-spacing:-0.143px;">Mar 2, 2020 1:14 PM</div>
<div class="t" style="left:1798.40px;top:898.90px;font-size:11.60px;color:#222;height:20px;line-height:20px;letter-spacing:-0.028px;">1d 12:16:18.660</div>
<div class="abs" style="left:1603px;top:921px;width:309px;height:22px;background:#f5f5f5;border-bottom:1px solid #dde1e6"></div>
<div class="cb" style="left:1607.8px;top:925.5px"></div>
<svg style="left:1633.45px;top:923px" width="9.5" height="13.4" viewBox="0 0 9.5 13.4"><path d="M3 .7 H.8 V12.7 H3 M6.5 .7 H8.7 V12.7 H6.5" stroke="#1ba1e2" stroke-width="1.3" fill="none"/><path d="M2.5 7.4 L4.1 2.9 L5.6 10.8 L7.2 5.8" stroke="#1ba1e2" stroke-width="1.1" fill="none" stroke-linejoin="round"/></svg>
<div class="t" style="left:1652.00px;top:921.90px;font-size:11.60px;color:#222;height:20px;line-height:20px;letter-spacing:-0.143px;">Mar 5, 2020 9:00 PM</div>
<div class="t" style="left:1798.40px;top:921.90px;font-size:11.60px;color:#222;height:20px;line-height:20px;letter-spacing:-0.028px;">1d 12:03:28.353</div>
<div class="abs" style="left:1912px;top:705px;width:6px;height:238px;background:#ececec"></div>
<div class="abs" style="left:1912px;top:706px;width:6px;height:72px;background:#b2b2b2;border-radius:3px"></div>
<div class="abs" style="left:1602px;top:943px;width:316px;height:7px;background:#f0f0f0"></div>
<div class="abs" style="left:1602px;top:943px;width:308px;height:7px;background:#dedede;border-radius:3.5px"></div>
<div class="abs" style="left:1602px;top:943px;width:242px;height:7px;background:#b2b2b2;border-radius:3.5px"></div>
<div id="bot"></div>
</body></html>
